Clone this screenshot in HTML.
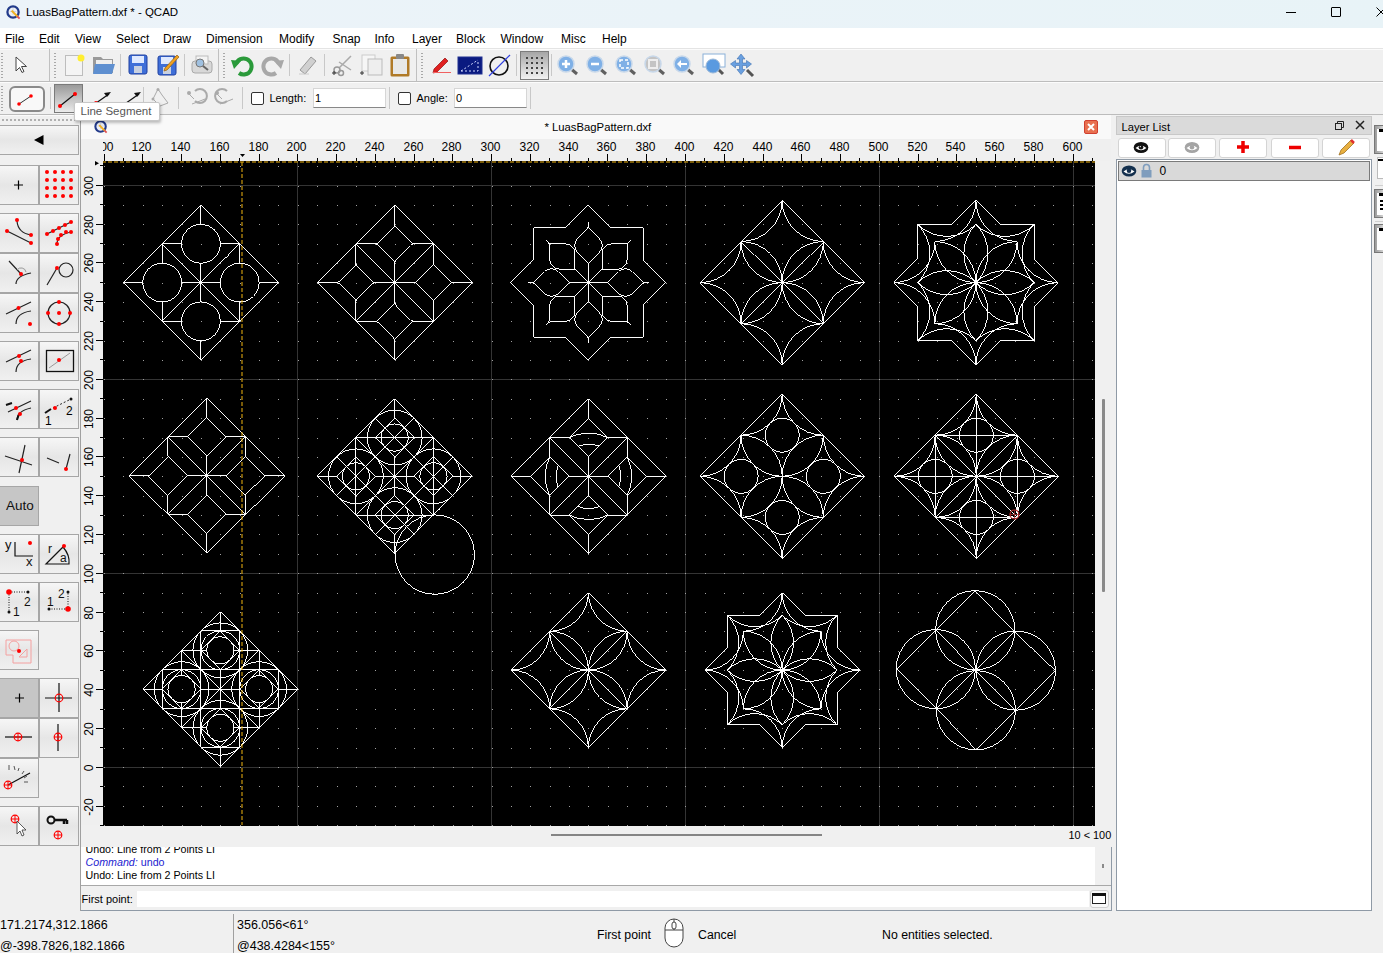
<!DOCTYPE html>
<html><head><meta charset="utf-8"><style>
html,body{margin:0;padding:0;width:1383px;height:953px;overflow:hidden;background:#f0f0f0}
body{position:relative;font-family:"Liberation Sans", sans-serif}
div,span,svg{position:absolute}
svg{overflow:visible}
.t{white-space:nowrap;line-height:1;font-family:"Liberation Sans", sans-serif}
</style></head><body>
<div style="left:0px;top:0px;width:1383px;height:28px;background:linear-gradient(90deg,#ecf3f9,#e8f3f7)"></div>
<svg style="left:6px;top:5px" width="15" height="15" viewBox="0 0 16 16"><circle cx="7.5" cy="7.5" r="6" fill="#eef0f6" stroke="#223a8a" stroke-width="2.4"/><path d="M4 7h7M7.5 3.5v7" stroke="#c0c8d8" stroke-width=".8"/><path d="M6 6l6.5 6.5" stroke="#f0b020" stroke-width="2.2"/><path d="M12 12l2.5 2.5" stroke="#e05050" stroke-width="2"/></svg>
<span class="t" style="left:26.0px;top:7.3px;font-size:11.5px;color:#000;">LuasBagPattern.dxf * - QCAD</span>
<div style="left:1286px;top:12px;width:10px;height:1px;background:#000"></div>
<div style="left:1331px;top:7px;width:10px;height:10px;border:1px solid #000;border-radius:1px;box-sizing:border-box"></div>
<svg style="left:1376px;top:7px" width="10" height="10"><path d="M0.5 0.5L9.5 9.5M9.5 0.5L0.5 9.5" stroke="#000" stroke-width="1"/></svg>
<div style="left:0px;top:28px;width:1383px;height:20px;background:#fff"></div>
<span class="t" style="left:5.0px;top:32.8px;font-size:12px;color:#000;">File</span>
<span class="t" style="left:39.0px;top:32.8px;font-size:12px;color:#000;">Edit</span>
<span class="t" style="left:75.0px;top:32.8px;font-size:12px;color:#000;">View</span>
<span class="t" style="left:116.0px;top:32.8px;font-size:12px;color:#000;">Select</span>
<span class="t" style="left:163.0px;top:32.8px;font-size:12px;color:#000;">Draw</span>
<span class="t" style="left:206.0px;top:32.8px;font-size:12px;color:#000;">Dimension</span>
<span class="t" style="left:279.0px;top:32.8px;font-size:12px;color:#000;">Modify</span>
<span class="t" style="left:332.5px;top:32.8px;font-size:12px;color:#000;">Snap</span>
<span class="t" style="left:374.5px;top:32.8px;font-size:12px;color:#000;">Info</span>
<span class="t" style="left:412.0px;top:32.8px;font-size:12px;color:#000;">Layer</span>
<span class="t" style="left:456.0px;top:32.8px;font-size:12px;color:#000;">Block</span>
<span class="t" style="left:500.5px;top:32.8px;font-size:12px;color:#000;">Window</span>
<span class="t" style="left:561.0px;top:32.8px;font-size:12px;color:#000;">Misc</span>
<span class="t" style="left:602.0px;top:32.8px;font-size:12px;color:#000;">Help</span>
<div style="left:0px;top:48px;width:1383px;height:67px;background:#f0f0f0"></div>
<div style="left:0px;top:48px;width:1383px;height:1px;background:#e4e4e4"></div>
<div style="left:0px;top:49px;width:1383px;height:1px;background:#fbfbfb"></div>
<div style="left:0px;top:81px;width:1383px;height:1px;background:#bdbdbd"></div>
<div style="left:0px;top:82px;width:1383px;height:1px;background:#fcfcfc"></div>
<div style="left:0px;top:114px;width:1383px;height:1px;background:#bcbcbc"></div>
<div style="left:1px;top:53px;width:2px;height:25px;background:repeating-linear-gradient(180deg,#a8a8a8 0 1px,transparent 1px 3px)"></div>
<div style="left:49px;top:49px;width:1px;height:32px;background:#c0c0c0"></div>
<div style="left:54px;top:53px;width:2px;height:25px;background:repeating-linear-gradient(180deg,#a8a8a8 0 1px,transparent 1px 3px)"></div>
<div style="left:120px;top:54px;width:1px;height:22px;background:#c8c8c8"></div>
<div style="left:184px;top:54px;width:1px;height:22px;background:#c8c8c8"></div>
<div style="left:218px;top:49px;width:1px;height:32px;background:#c0c0c0"></div>
<div style="left:223px;top:53px;width:2px;height:25px;background:repeating-linear-gradient(180deg,#a8a8a8 0 1px,transparent 1px 3px)"></div>
<div style="left:289px;top:54px;width:1px;height:22px;background:#c8c8c8"></div>
<div style="left:324px;top:54px;width:1px;height:22px;background:#c8c8c8"></div>
<div style="left:416px;top:49px;width:1px;height:32px;background:#c0c0c0"></div>
<div style="left:421px;top:53px;width:2px;height:25px;background:repeating-linear-gradient(180deg,#a8a8a8 0 1px,transparent 1px 3px)"></div>
<div style="left:516px;top:54px;width:1px;height:22px;background:#c8c8c8"></div>
<div style="left:551px;top:54px;width:1px;height:22px;background:#c8c8c8"></div>

<svg style="left:14px;top:56px" width="14" height="18"><path d="M2 1v14l3.5-3.5 2.5 5 2-1-2.5-5h5z" fill="#fff" stroke="#444" stroke-width="1"/></svg>
<svg style="left:64px;top:53px" width="22" height="24"><rect x="1.5" y="2.5" width="17" height="20" fill="#f4f4f4" stroke="#bdbdbd"/><circle cx="17" cy="5" r="3.5" fill="#ffee30"/></svg>
<svg style="left:92px;top:54px" width="24" height="22"><path d="M1 3h8l2 2h10v14H1z" fill="#9a9a9a"/><path d="M4 6h16v4H4z" fill="#eee"/><path d="M3 10h20l-3 10H1z" fill="#5e8fd0"/></svg>
<svg style="left:128px;top:54px" width="20" height="21"><rect x="1" y="1" width="18" height="19" rx="2" fill="#3f6fd8" stroke="#2040a0"/><rect x="4" y="2" width="12" height="7" fill="#dfe9ff"/><rect x="6" y="12" width="8" height="7" fill="#c8d0e0"/></svg>
<svg style="left:157px;top:53px" width="22" height="22"><rect x="1" y="3" width="18" height="19" rx="2" fill="#3f6fd8" stroke="#2040a0"/><rect x="4" y="4" width="12" height="7" fill="#dfe9ff"/><rect x="6" y="14" width="8" height="7" fill="#c8d0e0"/><path d="M8 15l12-13 2 2-12 13-3 1z" fill="#f0a020" stroke="#906010" stroke-width=".7"/></svg>
<svg style="left:191px;top:55px" width="22" height="20"><rect x="1" y="6" width="20" height="12" rx="3" fill="#d8d8d8" stroke="#aaa"/><rect x="5" y="1" width="12" height="8" fill="#f4f4f4" stroke="#bbb"/><circle cx="9" cy="8" r="4" fill="#9fc0e0" stroke="#777"/><path d="M12 11l5 4" stroke="#666" stroke-width="2"/></svg>
<svg style="left:231px;top:55px" width="24" height="21"><path d="M5 9a8 8 0 1 1 3 9" fill="none" stroke="#2a9a3a" stroke-width="4"/><path d="M0 5l10 1-7 8z" fill="#2a9a3a"/></svg>
<svg style="left:260px;top:55px" width="24" height="21"><path d="M19 9a8 8 0 1 0-3 9" fill="none" stroke="#a8a8a8" stroke-width="4"/><path d="M24 5l-10 1 7 8z" fill="#a8a8a8"/></svg>
<svg style="left:297px;top:55px" width="21" height="20"><path d="M3 15l11-13 5 4-11 13z" fill="#d0d0d0" stroke="#999"/><path d="M2 19h10" stroke="#ccc"/></svg>
<svg style="left:331px;top:54px" width="22" height="22"><path d="M8 14l12-12M8 8l12 8" stroke="#aaa" stroke-width="1.5"/><circle cx="6" cy="16" r="3" fill="none" stroke="#999" stroke-width="1.5"/><circle cx="10" cy="19" r="2.5" fill="none" stroke="#999" stroke-width="1.5"/><path d="M1 19h4M3 17v4" stroke="#333"/></svg>
<svg style="left:359px;top:54px" width="25" height="22"><rect x="3" y="1" width="13" height="16" fill="#f6f6f6" stroke="#ccc"/><rect x="9" y="5" width="14" height="16" fill="#eee" stroke="#bbb"/><path d="M1 19h4M3 17v4" stroke="#333"/></svg>
<svg style="left:389px;top:53px" width="22" height="24"><rect x="1.5" y="3.5" width="19" height="20" rx="1.5" fill="#b07a28"/><rect x="4" y="6" width="14" height="15" fill="#e8e8e8"/><rect x="7" y="1" width="8" height="5" rx="1" fill="#888"/></svg>
<svg style="left:432px;top:56px" width="19" height="17"><path d="M2 13L13 2l3 3L5 16l-4 1z" fill="#e02020" stroke="#901010" stroke-width=".7"/><path d="M1 16.5h18" stroke="#f06060"/></svg>
<svg style="left:458px;top:57px" width="24" height="17"><rect x="0" y="0" width="24" height="17" fill="#0a1a80" stroke="#203090"/><path d="M3 14L20 3M3 14h17V3" stroke="#d0d8ff" stroke-dasharray="2 2" fill="none"/></svg>
<svg style="left:488px;top:54px" width="23" height="23"><circle cx="11" cy="12" r="9" fill="none" stroke="#111" stroke-width="1.6"/><path d="M1 22L22 1" stroke="#3040e0" stroke-width="1.2"/></svg>
<div style="left:520px;top:51px;width:29px;height:29px;box-sizing:border-box;border:1px solid #7d7d7d;background:linear-gradient(#a6a6a6,#f2f2f2)"></div>
<svg style="left:520px;top:51px" width="29" height="29"><g fill="#444"><rect x="6" y="6" width="2" height="2"/><rect x="11" y="6" width="2" height="2"/><rect x="16" y="6" width="2" height="2"/><rect x="21" y="6" width="2" height="2"/><rect x="6" y="11" width="2" height="2"/><rect x="11" y="11" width="2" height="2"/><rect x="16" y="11" width="2" height="2"/><rect x="21" y="11" width="2" height="2"/><rect x="6" y="16" width="2" height="2"/><rect x="11" y="16" width="2" height="2"/><rect x="16" y="16" width="2" height="2"/><rect x="21" y="16" width="2" height="2"/><rect x="6" y="21" width="2" height="2"/><rect x="11" y="21" width="2" height="2"/><rect x="16" y="21" width="2" height="2"/><rect x="21" y="21" width="2" height="2"/></g></svg>

<svg style="left:557px;top:55px" width="23" height="21"><path d="M13 13l7 6" stroke="#606060" stroke-width="3"/><circle cx="9" cy="9" r="8" fill="#7fb0e6" stroke="#c8d8ea" stroke-width="1.5"/><path d="M5 9h8M9 5v8" stroke="#fff" stroke-width="2.5"/></svg>
<svg style="left:586px;top:55px" width="23" height="21"><path d="M13 13l7 6" stroke="#606060" stroke-width="3"/><circle cx="9" cy="9" r="8" fill="#7fb0e6" stroke="#c8d8ea" stroke-width="1.5"/><path d="M5 9h8" stroke="#fff" stroke-width="2.5"/></svg>
<svg style="left:615px;top:55px" width="23" height="21"><path d="M13 13l7 6" stroke="#606060" stroke-width="3"/><circle cx="9" cy="9" r="8" fill="#7fb0e6" stroke="#c8d8ea" stroke-width="1.5"/><rect x="5" y="5" width="8" height="8" fill="none" stroke="#fff" stroke-width="1.5" stroke-dasharray="3 2"/></svg>
<svg style="left:644px;top:55px" width="23" height="21"><path d="M13 13l7 6" stroke="#606060" stroke-width="3"/><circle cx="9" cy="9" r="8" fill="#c4c4c4" stroke="#c8d8ea" stroke-width="1.5"/><rect x="5" y="5" width="8" height="8" fill="none" stroke="#eee" stroke-width="2"/></svg>
<svg style="left:673px;top:55px" width="23" height="21"><path d="M13 13l7 6" stroke="#606060" stroke-width="3"/><circle cx="9" cy="9" r="8" fill="#7fb0e6" stroke="#c8d8ea" stroke-width="1.5"/><path d="M4 9l4-4v3h6v2H8v3z" fill="#fff"/></svg>
<svg style="left:702px;top:53px" width="24" height="24"><rect x="1" y="1" width="22" height="13" fill="#fff" stroke="#8ab0d8"/><path d="M15 15l6 6" stroke="#555" stroke-width="3"/><circle cx="11" cy="13" r="7" fill="#5a9ae0" stroke="#9bb8d8"/></svg>
<svg style="left:730px;top:53px" width="25" height="25"><path d="M17 17l6 6" stroke="#555" stroke-width="3"/><path d="M11 1l4 5h-2.5v4h4v-2.5l5 3.5-5 4v-2.5h-4v4h2.5l-4 5-4-5h2.5v-4h-4v2.5l-5-4 5-3.5v2.5h4v-4H7z" fill="#6aa0e0" stroke="#4070b0" stroke-width=".6"/></svg>
<div style="left:1px;top:86px;width:2px;height:25px;background:repeating-linear-gradient(180deg,#a8a8a8 0 1px,transparent 1px 3px)"></div>
<div style="left:9px;top:86px;width:36px;height:26px;box-sizing:border-box;border:2px solid #8a8a8a;border-radius:6px;background:#f8f8f8"></div>
<svg style="left:9px;top:86px" width="36" height="26"><path d="M10 18L22 10" stroke="#333"/><circle cx="10" cy="18" r="1.8" fill="#f00"/><circle cx="22" cy="10" r="1.8" fill="#f00"/></svg>
<div style="left:50px;top:87px;width:1px;height:22px;background:#c8c8c8"></div>
<div style="left:54px;top:84px;width:29px;height:29px;box-sizing:border-box;border:1px solid #7a7a7a;background:linear-gradient(#9a9a9a,#ebebeb)"></div>
<svg style="left:54px;top:84px" width="29" height="29"><path d="M6 22L21 10" stroke="#111" stroke-width="1.2"/><circle cx="6" cy="22" r="2" fill="#f00"/><circle cx="21" cy="10" r="2" fill="#f00"/></svg>
<svg style="left:85px;top:84px" width="30" height="29"><path d="M4 24L24 10" stroke="#111" stroke-width="1.2"/><path d="M26 8l-7 1 3 4z" fill="#111"/><circle cx="11" cy="19" r="2" fill="#f00"/></svg>
<svg style="left:115px;top:84px" width="30" height="29"><path d="M4 24L24 10" stroke="#111" stroke-width="1.2"/><path d="M26 8l-7 1 3 4z" fill="#111"/></svg>
<div style="left:143px;top:87px;width:1px;height:22px;background:#c8c8c8"></div>
<svg style="left:151px;top:87px" width="20" height="22"><path d="M2 12l5-10 4 6 6 8-8 3z" fill="none" stroke="#aaa" stroke-width="1"/><circle cx="7" cy="2.5" r="1.5" fill="#aaa"/><circle cx="2" cy="12" r="1.5" fill="#aaa"/></svg>
<div style="left:178px;top:87px;width:1px;height:22px;background:#c8c8c8"></div>
<svg style="left:186px;top:87px" width="21" height="22"><path d="M2 6l6 6M6 17l8-3 5-2" stroke="#aaa" fill="none"/><path d="M9 4a7 7 0 1 1 0 10" stroke="#aaa" stroke-width="2" fill="none"/><circle cx="3" cy="6" r="2" fill="#aaa"/></svg>
<svg style="left:214px;top:87px" width="22" height="22"><path d="M2 6l6 6M6 17l8-3 5-2" stroke="#aaa" fill="none"/><path d="M13 4a7 7 0 1 0 0 10" stroke="#aaa" stroke-width="2" fill="none"/><circle cx="3" cy="6" r="2" fill="#aaa"/></svg>
<div style="left:242px;top:87px;width:1px;height:22px;background:#c8c8c8"></div>
<div style="left:251px;top:92px;width:13px;height:13px;box-sizing:border-box;border:1px solid #333;border-radius:2px;background:#fff"></div>
<span class="t" style="left:269.5px;top:93.2px;font-size:11px;color:#000;">Length:</span>
<div style="left:313px;top:88px;width:73px;height:20px;box-sizing:border-box;border:1px solid #d6d6d6;border-bottom:1px solid #888;background:#fff"></div>
<span class="t" style="left:315.0px;top:93.2px;font-size:11px;color:#000;">1</span>
<div style="left:389px;top:87px;width:1px;height:22px;background:#c8c8c8"></div>
<div style="left:398px;top:92px;width:13px;height:13px;box-sizing:border-box;border:1px solid #333;border-radius:2px;background:#fff"></div>
<span class="t" style="left:416.5px;top:93.2px;font-size:11px;color:#000;">Angle:</span>
<div style="left:454px;top:88px;width:73px;height:20px;box-sizing:border-box;border:1px solid #d6d6d6;border-bottom:1px solid #888;background:#fff"></div>
<span class="t" style="left:456.0px;top:93.2px;font-size:11px;color:#000;">0</span>
<div style="left:530px;top:87px;width:1px;height:22px;background:#c8c8c8"></div>
<div style="left:0px;top:115px;width:80px;height:796px;background:#f0f0f0"></div>
<div style="left:0px;top:115px;width:80px;height:1px;background:#fafafa"></div>
<div style="left:2px;top:119px;width:74px;height:2px;background:repeating-linear-gradient(90deg,#b0b0b0 0 2px,transparent 2px 4px)"></div>
<div style="left:-1px;top:125px;width:80px;height:30px;box-sizing:border-box;border:1px solid #a6a6a6;background:linear-gradient(#f6f6f6,#e6e6e6 50%,#f0f0f0)"></div>
<svg style="left:34px;top:135px" width="10" height="10"><path d="M0 5L9.5 0v10z" fill="#000"/></svg>
<div style="left:-1px;top:165px;width:40px;height:40px;box-sizing:border-box;border:1px solid #a6a6a6;background:linear-gradient(#f6f6f6,#e6e6e6 50%,#f0f0f0)"></div>
<div style="left:39px;top:165px;width:40px;height:40px;box-sizing:border-box;border:1px solid #a6a6a6;background:linear-gradient(#f6f6f6,#e6e6e6 50%,#f0f0f0)"></div>
<div style="left:-1px;top:213px;width:40px;height:40px;box-sizing:border-box;border:1px solid #a6a6a6;background:linear-gradient(#f6f6f6,#e6e6e6 50%,#f0f0f0)"></div>
<div style="left:39px;top:213px;width:40px;height:40px;box-sizing:border-box;border:1px solid #a6a6a6;background:linear-gradient(#f6f6f6,#e6e6e6 50%,#f0f0f0)"></div>
<div style="left:-1px;top:253px;width:40px;height:40px;box-sizing:border-box;border:1px solid #a6a6a6;background:linear-gradient(#f6f6f6,#e6e6e6 50%,#f0f0f0)"></div>
<div style="left:39px;top:253px;width:40px;height:40px;box-sizing:border-box;border:1px solid #a6a6a6;background:linear-gradient(#f6f6f6,#e6e6e6 50%,#f0f0f0)"></div>
<div style="left:-1px;top:293px;width:40px;height:40px;box-sizing:border-box;border:1px solid #a6a6a6;background:linear-gradient(#f6f6f6,#e6e6e6 50%,#f0f0f0)"></div>
<div style="left:39px;top:293px;width:40px;height:40px;box-sizing:border-box;border:1px solid #a6a6a6;background:linear-gradient(#f6f6f6,#e6e6e6 50%,#f0f0f0)"></div>
<div style="left:-1px;top:341px;width:40px;height:40px;box-sizing:border-box;border:1px solid #a6a6a6;background:linear-gradient(#f6f6f6,#e6e6e6 50%,#f0f0f0)"></div>
<div style="left:39px;top:341px;width:40px;height:40px;box-sizing:border-box;border:1px solid #a6a6a6;background:linear-gradient(#f6f6f6,#e6e6e6 50%,#f0f0f0)"></div>
<div style="left:-1px;top:389px;width:40px;height:40px;box-sizing:border-box;border:1px solid #a6a6a6;background:linear-gradient(#f6f6f6,#e6e6e6 50%,#f0f0f0)"></div>
<div style="left:39px;top:389px;width:40px;height:40px;box-sizing:border-box;border:1px solid #a6a6a6;background:linear-gradient(#f6f6f6,#e6e6e6 50%,#f0f0f0)"></div>
<div style="left:-1px;top:437px;width:40px;height:40px;box-sizing:border-box;border:1px solid #a6a6a6;background:linear-gradient(#f6f6f6,#e6e6e6 50%,#f0f0f0)"></div>
<div style="left:39px;top:437px;width:40px;height:40px;box-sizing:border-box;border:1px solid #a6a6a6;background:linear-gradient(#f6f6f6,#e6e6e6 50%,#f0f0f0)"></div>
<div style="left:-1px;top:486px;width:40px;height:40px;box-sizing:border-box;border:1px solid #a6a6a6;background:linear-gradient(#c6c6c6,#c6c6c6)"></div>
<div style="left:-1px;top:534px;width:40px;height:40px;box-sizing:border-box;border:1px solid #a6a6a6;background:linear-gradient(#f6f6f6,#e6e6e6 50%,#f0f0f0)"></div>
<div style="left:39px;top:534px;width:40px;height:40px;box-sizing:border-box;border:1px solid #a6a6a6;background:linear-gradient(#f6f6f6,#e6e6e6 50%,#f0f0f0)"></div>
<div style="left:-1px;top:582px;width:40px;height:40px;box-sizing:border-box;border:1px solid #a6a6a6;background:linear-gradient(#f6f6f6,#e6e6e6 50%,#f0f0f0)"></div>
<div style="left:39px;top:582px;width:40px;height:40px;box-sizing:border-box;border:1px solid #a6a6a6;background:linear-gradient(#f6f6f6,#e6e6e6 50%,#f0f0f0)"></div>
<div style="left:-1px;top:630px;width:40px;height:40px;box-sizing:border-box;border:1px solid #a6a6a6;background:linear-gradient(#f6f6f6,#e6e6e6 50%,#f0f0f0)"></div>
<div style="left:-1px;top:678px;width:40px;height:40px;box-sizing:border-box;border:1px solid #a6a6a6;background:linear-gradient(#c6c6c6,#c6c6c6)"></div>
<div style="left:39px;top:678px;width:40px;height:40px;box-sizing:border-box;border:1px solid #a6a6a6;background:linear-gradient(#f6f6f6,#e6e6e6 50%,#f0f0f0)"></div>
<div style="left:-1px;top:718px;width:40px;height:40px;box-sizing:border-box;border:1px solid #a6a6a6;background:linear-gradient(#f6f6f6,#e6e6e6 50%,#f0f0f0)"></div>
<div style="left:39px;top:718px;width:40px;height:40px;box-sizing:border-box;border:1px solid #a6a6a6;background:linear-gradient(#f6f6f6,#e6e6e6 50%,#f0f0f0)"></div>
<div style="left:-1px;top:758px;width:40px;height:40px;box-sizing:border-box;border:1px solid #a6a6a6;background:linear-gradient(#f6f6f6,#e6e6e6 50%,#f0f0f0)"></div>
<div style="left:-1px;top:806px;width:40px;height:40px;box-sizing:border-box;border:1px solid #a6a6a6;background:linear-gradient(#f6f6f6,#e6e6e6 50%,#f0f0f0)"></div>
<div style="left:39px;top:806px;width:40px;height:40px;box-sizing:border-box;border:1px solid #a6a6a6;background:linear-gradient(#f6f6f6,#e6e6e6 50%,#f0f0f0)"></div>

<svg style="left:0px;top:165px" width="80" height="40"><path d="M14 20h9M18.5 15.5v9" stroke="#000" stroke-width="1.2"/>
<g fill="#f00"><circle cx="47" cy="7" r="2"/><circle cx="55" cy="7" r="2"/><circle cx="63" cy="7" r="2"/><circle cx="71" cy="7" r="2"/><circle cx="47" cy="15" r="2"/><circle cx="55" cy="15" r="2"/><circle cx="63" cy="15" r="2"/><circle cx="71" cy="15" r="2"/><circle cx="47" cy="23" r="2"/><circle cx="55" cy="23" r="2"/><circle cx="63" cy="23" r="2"/><circle cx="71" cy="23" r="2"/><circle cx="47" cy="31" r="2"/><circle cx="55" cy="31" r="2"/><circle cx="63" cy="31" r="2"/><circle cx="71" cy="31" r="2"/></g></svg>
<svg style="left:0px;top:213px" width="80" height="40"><path d="M7 18l24 12M17 8q1 12 14 14" stroke="#222" stroke-width="1.2" fill="none"/><g fill="#f00"><circle cx="7" cy="18" r="2"/><circle cx="31" cy="30" r="2"/><circle cx="17" cy="7" r="2"/><circle cx="31" cy="22" r="2"/></g>
<path d="M47 21l24-12M57 31q0-9 14-12" stroke="#222" stroke-width="1.2" fill="none"/><g fill="#f00"><circle cx="47" cy="21" r="2"/><circle cx="53" cy="18" r="2"/><circle cx="59" cy="15" r="2"/><circle cx="65" cy="12" r="2"/><circle cx="71" cy="9" r="2"/><circle cx="57" cy="31" r="2"/><circle cx="58" cy="26" r="2"/><circle cx="61" cy="22" r="2"/><circle cx="66" cy="19" r="2"/><circle cx="71" cy="19" r="2"/></g></svg>
<svg style="left:0px;top:253px" width="80" height="40"><path d="M9 8l12 13M16 31q0-8 15-11" stroke="#222" stroke-width="1.2" fill="none"/><path d="M17 17a5 5 0 0 1 9 2" stroke="#999" fill="none"/><circle cx="21" cy="21" r="2" fill="#f00"/>
<circle cx="66" cy="17" r="7" fill="none" stroke="#222" stroke-width="1.2"/><path d="M47 32l10-17" stroke="#222" stroke-width="1.2"/><circle cx="57" cy="15" r="2" fill="#f00"/></svg>
<svg style="left:0px;top:293px" width="80" height="40"><path d="M6 21l25-12M16 31q0-11 15-13" stroke="#222" stroke-width="1.2" fill="none"/><circle cx="18.5" cy="15" r="2" fill="#f00"/><circle cx="30" cy="31" r="2" fill="#f00"/>
<circle cx="59" cy="20" r="11" fill="none" stroke="#222" stroke-width="1.2"/><g fill="#f00"><circle cx="59" cy="20" r="2"/><circle cx="59" cy="9" r="2"/><circle cx="59" cy="31" r="2"/><circle cx="48" cy="20" r="2"/><circle cx="70" cy="20" r="2"/></g></svg>
<svg style="left:0px;top:341px" width="80" height="40"><path d="M6 21l25-12M16 31q0-11 15-13" stroke="#222" stroke-width="1.2" fill="none"/><circle cx="19" cy="15" r="2" fill="#f00"/><circle cx="21" cy="20" r="2" fill="#f00"/>
<rect x="46.5" y="9.5" width="27" height="21" fill="none" stroke="#111" stroke-width="1.3"/><path d="M49 27l21-15" stroke="#999"/><circle cx="59" cy="19" r="2" fill="#f00"/></svg>
<svg style="left:0px;top:389px" width="80" height="40"><path d="M8 23l23-11M17 31q0-9 14-12" stroke="#222" stroke-width="1.2" fill="none"/><path d="M6 16l6-2M17 31l2-6" stroke="#111" stroke-width="2"/><circle cx="16" cy="19" r="2" fill="#f00"/><circle cx="20" cy="25" r="2" fill="#f00"/>
<path d="M53 19l18-9" stroke="#222" stroke-dasharray="2 2"/><circle cx="71" cy="10" r="1.5" fill="#111"/><path d="M45 24l6-4" stroke="#111" stroke-width="2"/><circle cx="55" cy="19" r="2" fill="#f00"/><text x="66" y="26" font-size="12" font-family="Liberation Sans">2</text><text x="45" y="36" font-size="12" font-family="Liberation Sans">1</text></svg>
<svg style="left:0px;top:437px" width="80" height="40"><path d="M5 19l27 9M19 36l6-28" stroke="#222" stroke-width="1.2"/><circle cx="22" cy="23" r="2" fill="#f00"/>
<path d="M47 21l12 5M66 32l4-15" stroke="#222" stroke-width="1.2"/><circle cx="66" cy="32" r="2" fill="#f00"/></svg>

<span class="t" style="left:6.0px;top:499.1px;font-size:13.5px;color:#111;">Auto</span>

<svg style="left:0px;top:534px" width="80" height="40"><text x="5" y="15" font-size="13" font-family="Liberation Sans" fill="#111">y</text><text x="26" y="32" font-size="13" font-family="Liberation Sans" fill="#111">x</text><path d="M15 8v14h18" stroke="#111" fill="none" stroke-width="1.2"/><circle cx="30" cy="9" r="2" fill="#f00"/>
<path d="M46 30l17-17q7 8 6 17z" stroke="#111" fill="none" stroke-width="1.2"/><text x="48" y="19" font-size="12" font-family="Liberation Sans" fill="#111">r</text><text x="60" y="28" font-size="12" font-family="Liberation Sans" fill="#111">a</text><circle cx="64" cy="12" r="2" fill="#f00"/></svg>
<svg style="left:0px;top:582px" width="80" height="40"><path d="M9 10h19M9 10v20" stroke="#111" stroke-dasharray="1 1.5"/><circle cx="9" cy="10" r="2.8" fill="#f00"/><circle cx="28" cy="10" r="1.5" fill="#111"/><circle cx="9" cy="30" r="1.5" fill="#111"/><text x="24" y="24" font-size="12" font-family="Liberation Sans" fill="#111">2</text><text x="13" y="34" font-size="12" font-family="Liberation Sans" fill="#111">1</text>
<path d="M49 27h19M68 9v18" stroke="#111" stroke-dasharray="1 1.5"/><circle cx="68" cy="27" r="2.8" fill="#f00"/><circle cx="49" cy="27" r="1.5" fill="#111"/><circle cx="68" cy="10" r="1.5" fill="#111"/><text x="58" y="16" font-size="12" font-family="Liberation Sans" fill="#111">2</text><text x="47" y="24" font-size="12" font-family="Liberation Sans" fill="#111">1</text></svg>
<svg style="left:0px;top:630px" width="40" height="40"><path d="M6 10h25v23H13v-8H6z" fill="none" stroke="#f4a0a0"/><circle cx="14" cy="16" r="5" fill="none" stroke="#f4a0a0"/><path d="M19 27l8-8v8z" fill="none" stroke="#f4a0a0"/><circle cx="19" cy="21" r="2" fill="#f00"/></svg>
<svg style="left:0px;top:678px" width="80" height="40"><path d="M15 20h9M19.5 15.5v9" stroke="#000" stroke-width="1.2"/>
<path d="M45 20h27M59 5v29" stroke="#111" stroke-width="1.2"/><circle cx="59" cy="20" r="3.8" fill="none" stroke="#f00" stroke-width="1.2"/></svg>
<svg style="left:0px;top:718px" width="80" height="40"><path d="M5 19h27" stroke="#111" stroke-width="1.2"/><circle cx="18" cy="19" r="3.8" fill="none" stroke="#f00" stroke-width="1.2"/><path d="M14 19h8M18 15v8" stroke="#f00"/>
<path d="M58 6v27" stroke="#111" stroke-width="1.2"/><circle cx="58" cy="19" r="3.8" fill="none" stroke="#f00" stroke-width="1.2"/><path d="M54 19h8M58 15v8" stroke="#f00"/></svg>
<svg style="left:0px;top:758px" width="40" height="40"><path d="M8 27l22-12" stroke="#111" stroke-width="1.2"/><path d="M9 7v5M14 8l1 4M19 10l-1 3M24 13l-2 3M27 18l-3 2M28 24h-4" stroke="#555"/><circle cx="8" cy="27" r="3.8" fill="none" stroke="#f00" stroke-width="1.2"/><path d="M4 27h8M8 23v8" stroke="#f00"/></svg>
<svg style="left:0px;top:806px" width="80" height="40"><circle cx="15" cy="13" r="3.8" fill="none" stroke="#f00" stroke-width="1.2"/><path d="M11 13h8M15 9v8" stroke="#f00"/><path d="M17 15v13l3-3 2 5 2-1-2-5h4z" fill="#fff" stroke="#333" stroke-width=".8"/>
<circle cx="51" cy="14" r="3.5" fill="none" stroke="#111" stroke-width="2"/><path d="M54 14h13M64 14v4M67 14v4" stroke="#111" stroke-width="2.5"/><circle cx="58" cy="29" r="3.8" fill="none" stroke="#f00" stroke-width="1.2"/><path d="M54 29h8M58 25v8" stroke="#f00"/></svg>

<div style="left:80px;top:115px;width:1031px;height:796px;background:#f0f0f0"></div>
<div style="left:80px;top:115px;width:1px;height:796px;background:#a0a0a0"></div>
<div style="left:81px;top:115px;width:1030px;height:24px;background:#f9f9f9"></div>
<svg style="left:94px;top:120px" width="14" height="13" viewBox="0 0 16 15"><circle cx="7.5" cy="7.5" r="6" fill="#eef0f6" stroke="#223a8a" stroke-width="2.4"/><path d="M4 7h7M7.5 3.5v7" stroke="#c0c8d8" stroke-width=".8"/><path d="M6 6l6.5 6.5" stroke="#f0b020" stroke-width="2.2"/><path d="M12 12l2.5 2.5" stroke="#e05050" stroke-width="2"/></svg>
<span class="t" style="left:544.5px;top:121.8px;font-size:11.5px;color:#000;">*</span>
<span class="t" style="left:552.0px;top:121.9px;font-size:11.3px;color:#000;">LuasBagPattern.dxf</span>
<div style="left:1084px;top:120px;width:14px;height:14px;box-sizing:border-box;border:1px solid #d04030;border-radius:2px;background:#e87050"></div>
<svg style="left:1084px;top:120px" width="14" height="14"><path d="M4 4l6 6M10 4l-6 6" stroke="#fff" stroke-width="2"/></svg>
<div style="left:81px;top:139px;width:1030px;height:22px;background:#efefef"></div>
<div style="left:81px;top:139px;width:22px;height:686px;background:#efefef"></div>
<svg style="left:0;top:0" width="1383" height="953"><g fill="#000"><rect x="104" y="154" width="1" height="7"/><rect x="123" y="158" width="1" height="3"/><rect x="142" y="154" width="1" height="7"/><rect x="162" y="158" width="1" height="3"/><rect x="181" y="154" width="1" height="7"/><rect x="201" y="158" width="1" height="3"/><rect x="220" y="154" width="1" height="7"/><rect x="239" y="158" width="1" height="3"/><rect x="259" y="154" width="1" height="7"/><rect x="278" y="158" width="1" height="3"/><rect x="297" y="154" width="1" height="7"/><rect x="317" y="158" width="1" height="3"/><rect x="336" y="154" width="1" height="7"/><rect x="356" y="158" width="1" height="3"/><rect x="375" y="154" width="1" height="7"/><rect x="394" y="158" width="1" height="3"/><rect x="414" y="154" width="1" height="7"/><rect x="433" y="158" width="1" height="3"/><rect x="452" y="154" width="1" height="7"/><rect x="472" y="158" width="1" height="3"/><rect x="491" y="154" width="1" height="7"/><rect x="511" y="158" width="1" height="3"/><rect x="530" y="154" width="1" height="7"/><rect x="549" y="158" width="1" height="3"/><rect x="569" y="154" width="1" height="7"/><rect x="588" y="158" width="1" height="3"/><rect x="607" y="154" width="1" height="7"/><rect x="627" y="158" width="1" height="3"/><rect x="646" y="154" width="1" height="7"/><rect x="666" y="158" width="1" height="3"/><rect x="685" y="154" width="1" height="7"/><rect x="704" y="158" width="1" height="3"/><rect x="724" y="154" width="1" height="7"/><rect x="743" y="158" width="1" height="3"/><rect x="763" y="154" width="1" height="7"/><rect x="782" y="158" width="1" height="3"/><rect x="801" y="154" width="1" height="7"/><rect x="821" y="158" width="1" height="3"/><rect x="840" y="154" width="1" height="7"/><rect x="859" y="158" width="1" height="3"/><rect x="879" y="154" width="1" height="7"/><rect x="898" y="158" width="1" height="3"/><rect x="918" y="154" width="1" height="7"/><rect x="937" y="158" width="1" height="3"/><rect x="956" y="154" width="1" height="7"/><rect x="976" y="158" width="1" height="3"/><rect x="995" y="154" width="1" height="7"/><rect x="1014" y="158" width="1" height="3"/><rect x="1034" y="154" width="1" height="7"/><rect x="1053" y="158" width="1" height="3"/><rect x="1073" y="154" width="1" height="7"/><rect x="1092" y="158" width="1" height="3"/><rect x="100" y="825" width="3" height="1"/><rect x="96" y="806" width="7" height="1"/><rect x="100" y="786" width="3" height="1"/><rect x="96" y="767" width="7" height="1"/><rect x="100" y="747" width="3" height="1"/><rect x="96" y="728" width="7" height="1"/><rect x="100" y="709" width="3" height="1"/><rect x="96" y="689" width="7" height="1"/><rect x="100" y="670" width="3" height="1"/><rect x="96" y="650" width="7" height="1"/><rect x="100" y="631" width="3" height="1"/><rect x="96" y="612" width="7" height="1"/><rect x="100" y="592" width="3" height="1"/><rect x="96" y="573" width="7" height="1"/><rect x="100" y="553" width="3" height="1"/><rect x="96" y="534" width="7" height="1"/><rect x="100" y="515" width="3" height="1"/><rect x="96" y="495" width="7" height="1"/><rect x="100" y="476" width="3" height="1"/><rect x="96" y="456" width="7" height="1"/><rect x="100" y="437" width="3" height="1"/><rect x="96" y="418" width="7" height="1"/><rect x="100" y="398" width="3" height="1"/><rect x="96" y="379" width="7" height="1"/><rect x="100" y="359" width="3" height="1"/><rect x="96" y="340" width="7" height="1"/><rect x="100" y="321" width="3" height="1"/><rect x="96" y="301" width="7" height="1"/><rect x="100" y="282" width="3" height="1"/><rect x="96" y="262" width="7" height="1"/><rect x="100" y="243" width="3" height="1"/><rect x="96" y="224" width="7" height="1"/><rect x="100" y="204" width="3" height="1"/><rect x="96" y="185" width="7" height="1"/><rect x="100" y="165" width="3" height="1"/></g></svg>
<div style="left:103px;top:139px;width:992px;height:16px;overflow:hidden"><span class="t" style="left:-19.5px;top:1.8px;font-size:12px;width:40px;text-align:center">100</span><span class="t" style="left:18.5px;top:1.8px;font-size:12px;width:40px;text-align:center">120</span><span class="t" style="left:57.5px;top:1.8px;font-size:12px;width:40px;text-align:center">140</span><span class="t" style="left:96.5px;top:1.8px;font-size:12px;width:40px;text-align:center">160</span><span class="t" style="left:135.5px;top:1.8px;font-size:12px;width:40px;text-align:center">180</span><span class="t" style="left:173.5px;top:1.8px;font-size:12px;width:40px;text-align:center">200</span><span class="t" style="left:212.5px;top:1.8px;font-size:12px;width:40px;text-align:center">220</span><span class="t" style="left:251.5px;top:1.8px;font-size:12px;width:40px;text-align:center">240</span><span class="t" style="left:290.5px;top:1.8px;font-size:12px;width:40px;text-align:center">260</span><span class="t" style="left:328.5px;top:1.8px;font-size:12px;width:40px;text-align:center">280</span><span class="t" style="left:367.5px;top:1.8px;font-size:12px;width:40px;text-align:center">300</span><span class="t" style="left:406.5px;top:1.8px;font-size:12px;width:40px;text-align:center">320</span><span class="t" style="left:445.5px;top:1.8px;font-size:12px;width:40px;text-align:center">340</span><span class="t" style="left:483.5px;top:1.8px;font-size:12px;width:40px;text-align:center">360</span><span class="t" style="left:522.5px;top:1.8px;font-size:12px;width:40px;text-align:center">380</span><span class="t" style="left:561.5px;top:1.8px;font-size:12px;width:40px;text-align:center">400</span><span class="t" style="left:600.5px;top:1.8px;font-size:12px;width:40px;text-align:center">420</span><span class="t" style="left:639.5px;top:1.8px;font-size:12px;width:40px;text-align:center">440</span><span class="t" style="left:677.5px;top:1.8px;font-size:12px;width:40px;text-align:center">460</span><span class="t" style="left:716.5px;top:1.8px;font-size:12px;width:40px;text-align:center">480</span><span class="t" style="left:755.5px;top:1.8px;font-size:12px;width:40px;text-align:center">500</span><span class="t" style="left:794.5px;top:1.8px;font-size:12px;width:40px;text-align:center">520</span><span class="t" style="left:832.5px;top:1.8px;font-size:12px;width:40px;text-align:center">540</span><span class="t" style="left:871.5px;top:1.8px;font-size:12px;width:40px;text-align:center">560</span><span class="t" style="left:910.5px;top:1.8px;font-size:12px;width:40px;text-align:center">580</span><span class="t" style="left:949.5px;top:1.8px;font-size:12px;width:40px;text-align:center">600</span></div>
<div style="left:81px;top:160px;width:15px;height:665px;overflow:hidden"><span class="t" style="left:-12.5px;top:639.8px;font-size:12px;width:40px;height:14px;text-align:center;line-height:14px;transform:rotate(-90deg)">-20</span><span class="t" style="left:-12.5px;top:600.8px;font-size:12px;width:40px;height:14px;text-align:center;line-height:14px;transform:rotate(-90deg)">0</span><span class="t" style="left:-12.5px;top:561.8px;font-size:12px;width:40px;height:14px;text-align:center;line-height:14px;transform:rotate(-90deg)">20</span><span class="t" style="left:-12.5px;top:522.8px;font-size:12px;width:40px;height:14px;text-align:center;line-height:14px;transform:rotate(-90deg)">40</span><span class="t" style="left:-12.5px;top:483.8px;font-size:12px;width:40px;height:14px;text-align:center;line-height:14px;transform:rotate(-90deg)">60</span><span class="t" style="left:-12.5px;top:445.8px;font-size:12px;width:40px;height:14px;text-align:center;line-height:14px;transform:rotate(-90deg)">80</span><span class="t" style="left:-12.5px;top:406.8px;font-size:12px;width:40px;height:14px;text-align:center;line-height:14px;transform:rotate(-90deg)">100</span><span class="t" style="left:-12.5px;top:367.8px;font-size:12px;width:40px;height:14px;text-align:center;line-height:14px;transform:rotate(-90deg)">120</span><span class="t" style="left:-12.5px;top:328.8px;font-size:12px;width:40px;height:14px;text-align:center;line-height:14px;transform:rotate(-90deg)">140</span><span class="t" style="left:-12.5px;top:289.8px;font-size:12px;width:40px;height:14px;text-align:center;line-height:14px;transform:rotate(-90deg)">160</span><span class="t" style="left:-12.5px;top:251.8px;font-size:12px;width:40px;height:14px;text-align:center;line-height:14px;transform:rotate(-90deg)">180</span><span class="t" style="left:-12.5px;top:212.8px;font-size:12px;width:40px;height:14px;text-align:center;line-height:14px;transform:rotate(-90deg)">200</span><span class="t" style="left:-12.5px;top:173.8px;font-size:12px;width:40px;height:14px;text-align:center;line-height:14px;transform:rotate(-90deg)">220</span><span class="t" style="left:-12.5px;top:134.8px;font-size:12px;width:40px;height:14px;text-align:center;line-height:14px;transform:rotate(-90deg)">240</span><span class="t" style="left:-12.5px;top:95.8px;font-size:12px;width:40px;height:14px;text-align:center;line-height:14px;transform:rotate(-90deg)">260</span><span class="t" style="left:-12.5px;top:57.8px;font-size:12px;width:40px;height:14px;text-align:center;line-height:14px;transform:rotate(-90deg)">280</span><span class="t" style="left:-12.5px;top:18.8px;font-size:12px;width:40px;height:14px;text-align:center;line-height:14px;transform:rotate(-90deg)">300</span></div>
<svg style="left:240px;top:154px" width="6" height="4"><path d="M0 0h5l-2.5 3z" fill="#000"/></svg>
<svg style="left:95px;top:161px" width="5" height="5"><path d="M0 0v4.5l4-2.2z" fill="#000"/></svg>
<div style="left:103px;top:161px;width:992px;height:665px;background:#000;overflow:hidden"><svg style="left:0;top:0" width="992" height="665"><g transform="translate(-103,-161)"><g fill="#343434"><rect x="297" y="160" width="1" height="666"/><rect x="491" y="160" width="1" height="666"/><rect x="685" y="160" width="1" height="666"/><rect x="879" y="160" width="1" height="666"/><rect x="1073" y="160" width="1" height="666"/><rect x="103" y="185" width="992" height="1"/><rect x="103" y="379" width="992" height="1"/><rect x="103" y="573" width="992" height="1"/><rect x="103" y="767" width="992" height="1"/></g><path fill="#a0a0a0" d="M104 825h1v1h-1zM104 806h1v1h-1zM104 786h1v1h-1zM104 767h1v1h-1zM104 748h1v1h-1zM104 728h1v1h-1zM104 709h1v1h-1zM104 689h1v1h-1zM104 670h1v1h-1zM104 651h1v1h-1zM104 631h1v1h-1zM104 612h1v1h-1zM104 593h1v1h-1zM104 573h1v1h-1zM104 554h1v1h-1zM104 534h1v1h-1zM104 515h1v1h-1zM104 496h1v1h-1zM104 476h1v1h-1zM104 457h1v1h-1zM104 438h1v1h-1zM104 418h1v1h-1zM104 399h1v1h-1zM104 379h1v1h-1zM104 360h1v1h-1zM104 341h1v1h-1zM104 321h1v1h-1zM104 302h1v1h-1zM104 283h1v1h-1zM104 263h1v1h-1zM104 244h1v1h-1zM104 224h1v1h-1zM104 205h1v1h-1zM104 186h1v1h-1zM104 166h1v1h-1zM123 825h1v1h-1zM123 806h1v1h-1zM123 786h1v1h-1zM123 767h1v1h-1zM123 748h1v1h-1zM123 728h1v1h-1zM123 709h1v1h-1zM123 689h1v1h-1zM123 670h1v1h-1zM123 651h1v1h-1zM123 631h1v1h-1zM123 612h1v1h-1zM123 593h1v1h-1zM123 573h1v1h-1zM123 554h1v1h-1zM123 534h1v1h-1zM123 515h1v1h-1zM123 496h1v1h-1zM123 476h1v1h-1zM123 457h1v1h-1zM123 438h1v1h-1zM123 418h1v1h-1zM123 399h1v1h-1zM123 379h1v1h-1zM123 360h1v1h-1zM123 341h1v1h-1zM123 321h1v1h-1zM123 302h1v1h-1zM123 283h1v1h-1zM123 263h1v1h-1zM123 244h1v1h-1zM123 224h1v1h-1zM123 205h1v1h-1zM123 186h1v1h-1zM123 166h1v1h-1zM143 825h1v1h-1zM143 806h1v1h-1zM143 786h1v1h-1zM143 767h1v1h-1zM143 748h1v1h-1zM143 728h1v1h-1zM143 709h1v1h-1zM143 689h1v1h-1zM143 670h1v1h-1zM143 651h1v1h-1zM143 631h1v1h-1zM143 612h1v1h-1zM143 593h1v1h-1zM143 573h1v1h-1zM143 554h1v1h-1zM143 534h1v1h-1zM143 515h1v1h-1zM143 496h1v1h-1zM143 476h1v1h-1zM143 457h1v1h-1zM143 438h1v1h-1zM143 418h1v1h-1zM143 399h1v1h-1zM143 379h1v1h-1zM143 360h1v1h-1zM143 341h1v1h-1zM143 321h1v1h-1zM143 302h1v1h-1zM143 283h1v1h-1zM143 263h1v1h-1zM143 244h1v1h-1zM143 224h1v1h-1zM143 205h1v1h-1zM143 186h1v1h-1zM143 166h1v1h-1zM162 825h1v1h-1zM162 806h1v1h-1zM162 786h1v1h-1zM162 767h1v1h-1zM162 748h1v1h-1zM162 728h1v1h-1zM162 709h1v1h-1zM162 689h1v1h-1zM162 670h1v1h-1zM162 651h1v1h-1zM162 631h1v1h-1zM162 612h1v1h-1zM162 593h1v1h-1zM162 573h1v1h-1zM162 554h1v1h-1zM162 534h1v1h-1zM162 515h1v1h-1zM162 496h1v1h-1zM162 476h1v1h-1zM162 457h1v1h-1zM162 438h1v1h-1zM162 418h1v1h-1zM162 399h1v1h-1zM162 379h1v1h-1zM162 360h1v1h-1zM162 341h1v1h-1zM162 321h1v1h-1zM162 302h1v1h-1zM162 283h1v1h-1zM162 263h1v1h-1zM162 244h1v1h-1zM162 224h1v1h-1zM162 205h1v1h-1zM162 186h1v1h-1zM162 166h1v1h-1zM182 825h1v1h-1zM182 806h1v1h-1zM182 786h1v1h-1zM182 767h1v1h-1zM182 748h1v1h-1zM182 728h1v1h-1zM182 709h1v1h-1zM182 689h1v1h-1zM182 670h1v1h-1zM182 651h1v1h-1zM182 631h1v1h-1zM182 612h1v1h-1zM182 593h1v1h-1zM182 573h1v1h-1zM182 554h1v1h-1zM182 534h1v1h-1zM182 515h1v1h-1zM182 496h1v1h-1zM182 476h1v1h-1zM182 457h1v1h-1zM182 438h1v1h-1zM182 418h1v1h-1zM182 399h1v1h-1zM182 379h1v1h-1zM182 360h1v1h-1zM182 341h1v1h-1zM182 321h1v1h-1zM182 302h1v1h-1zM182 283h1v1h-1zM182 263h1v1h-1zM182 244h1v1h-1zM182 224h1v1h-1zM182 205h1v1h-1zM182 186h1v1h-1zM182 166h1v1h-1zM201 825h1v1h-1zM201 806h1v1h-1zM201 786h1v1h-1zM201 767h1v1h-1zM201 748h1v1h-1zM201 728h1v1h-1zM201 709h1v1h-1zM201 689h1v1h-1zM201 670h1v1h-1zM201 651h1v1h-1zM201 631h1v1h-1zM201 612h1v1h-1zM201 593h1v1h-1zM201 573h1v1h-1zM201 554h1v1h-1zM201 534h1v1h-1zM201 515h1v1h-1zM201 496h1v1h-1zM201 476h1v1h-1zM201 457h1v1h-1zM201 438h1v1h-1zM201 418h1v1h-1zM201 399h1v1h-1zM201 379h1v1h-1zM201 360h1v1h-1zM201 341h1v1h-1zM201 321h1v1h-1zM201 302h1v1h-1zM201 283h1v1h-1zM201 263h1v1h-1zM201 244h1v1h-1zM201 224h1v1h-1zM201 205h1v1h-1zM201 186h1v1h-1zM201 166h1v1h-1zM220 825h1v1h-1zM220 806h1v1h-1zM220 786h1v1h-1zM220 767h1v1h-1zM220 748h1v1h-1zM220 728h1v1h-1zM220 709h1v1h-1zM220 689h1v1h-1zM220 670h1v1h-1zM220 651h1v1h-1zM220 631h1v1h-1zM220 612h1v1h-1zM220 593h1v1h-1zM220 573h1v1h-1zM220 554h1v1h-1zM220 534h1v1h-1zM220 515h1v1h-1zM220 496h1v1h-1zM220 476h1v1h-1zM220 457h1v1h-1zM220 438h1v1h-1zM220 418h1v1h-1zM220 399h1v1h-1zM220 379h1v1h-1zM220 360h1v1h-1zM220 341h1v1h-1zM220 321h1v1h-1zM220 302h1v1h-1zM220 283h1v1h-1zM220 263h1v1h-1zM220 244h1v1h-1zM220 224h1v1h-1zM220 205h1v1h-1zM220 186h1v1h-1zM220 166h1v1h-1zM240 825h1v1h-1zM240 806h1v1h-1zM240 786h1v1h-1zM240 767h1v1h-1zM240 748h1v1h-1zM240 728h1v1h-1zM240 709h1v1h-1zM240 689h1v1h-1zM240 670h1v1h-1zM240 651h1v1h-1zM240 631h1v1h-1zM240 612h1v1h-1zM240 593h1v1h-1zM240 573h1v1h-1zM240 554h1v1h-1zM240 534h1v1h-1zM240 515h1v1h-1zM240 496h1v1h-1zM240 476h1v1h-1zM240 457h1v1h-1zM240 438h1v1h-1zM240 418h1v1h-1zM240 399h1v1h-1zM240 379h1v1h-1zM240 360h1v1h-1zM240 341h1v1h-1zM240 321h1v1h-1zM240 302h1v1h-1zM240 283h1v1h-1zM240 263h1v1h-1zM240 244h1v1h-1zM240 224h1v1h-1zM240 205h1v1h-1zM240 186h1v1h-1zM240 166h1v1h-1zM259 825h1v1h-1zM259 806h1v1h-1zM259 786h1v1h-1zM259 767h1v1h-1zM259 748h1v1h-1zM259 728h1v1h-1zM259 709h1v1h-1zM259 689h1v1h-1zM259 670h1v1h-1zM259 651h1v1h-1zM259 631h1v1h-1zM259 612h1v1h-1zM259 593h1v1h-1zM259 573h1v1h-1zM259 554h1v1h-1zM259 534h1v1h-1zM259 515h1v1h-1zM259 496h1v1h-1zM259 476h1v1h-1zM259 457h1v1h-1zM259 438h1v1h-1zM259 418h1v1h-1zM259 399h1v1h-1zM259 379h1v1h-1zM259 360h1v1h-1zM259 341h1v1h-1zM259 321h1v1h-1zM259 302h1v1h-1zM259 283h1v1h-1zM259 263h1v1h-1zM259 244h1v1h-1zM259 224h1v1h-1zM259 205h1v1h-1zM259 186h1v1h-1zM259 166h1v1h-1zM278 825h1v1h-1zM278 806h1v1h-1zM278 786h1v1h-1zM278 767h1v1h-1zM278 748h1v1h-1zM278 728h1v1h-1zM278 709h1v1h-1zM278 689h1v1h-1zM278 670h1v1h-1zM278 651h1v1h-1zM278 631h1v1h-1zM278 612h1v1h-1zM278 593h1v1h-1zM278 573h1v1h-1zM278 554h1v1h-1zM278 534h1v1h-1zM278 515h1v1h-1zM278 496h1v1h-1zM278 476h1v1h-1zM278 457h1v1h-1zM278 438h1v1h-1zM278 418h1v1h-1zM278 399h1v1h-1zM278 379h1v1h-1zM278 360h1v1h-1zM278 341h1v1h-1zM278 321h1v1h-1zM278 302h1v1h-1zM278 283h1v1h-1zM278 263h1v1h-1zM278 244h1v1h-1zM278 224h1v1h-1zM278 205h1v1h-1zM278 186h1v1h-1zM278 166h1v1h-1zM298 825h1v1h-1zM298 806h1v1h-1zM298 786h1v1h-1zM298 767h1v1h-1zM298 748h1v1h-1zM298 728h1v1h-1zM298 709h1v1h-1zM298 689h1v1h-1zM298 670h1v1h-1zM298 651h1v1h-1zM298 631h1v1h-1zM298 612h1v1h-1zM298 593h1v1h-1zM298 573h1v1h-1zM298 554h1v1h-1zM298 534h1v1h-1zM298 515h1v1h-1zM298 496h1v1h-1zM298 476h1v1h-1zM298 457h1v1h-1zM298 438h1v1h-1zM298 418h1v1h-1zM298 399h1v1h-1zM298 379h1v1h-1zM298 360h1v1h-1zM298 341h1v1h-1zM298 321h1v1h-1zM298 302h1v1h-1zM298 283h1v1h-1zM298 263h1v1h-1zM298 244h1v1h-1zM298 224h1v1h-1zM298 205h1v1h-1zM298 186h1v1h-1zM298 166h1v1h-1zM317 825h1v1h-1zM317 806h1v1h-1zM317 786h1v1h-1zM317 767h1v1h-1zM317 748h1v1h-1zM317 728h1v1h-1zM317 709h1v1h-1zM317 689h1v1h-1zM317 670h1v1h-1zM317 651h1v1h-1zM317 631h1v1h-1zM317 612h1v1h-1zM317 593h1v1h-1zM317 573h1v1h-1zM317 554h1v1h-1zM317 534h1v1h-1zM317 515h1v1h-1zM317 496h1v1h-1zM317 476h1v1h-1zM317 457h1v1h-1zM317 438h1v1h-1zM317 418h1v1h-1zM317 399h1v1h-1zM317 379h1v1h-1zM317 360h1v1h-1zM317 341h1v1h-1zM317 321h1v1h-1zM317 302h1v1h-1zM317 283h1v1h-1zM317 263h1v1h-1zM317 244h1v1h-1zM317 224h1v1h-1zM317 205h1v1h-1zM317 186h1v1h-1zM317 166h1v1h-1zM337 825h1v1h-1zM337 806h1v1h-1zM337 786h1v1h-1zM337 767h1v1h-1zM337 748h1v1h-1zM337 728h1v1h-1zM337 709h1v1h-1zM337 689h1v1h-1zM337 670h1v1h-1zM337 651h1v1h-1zM337 631h1v1h-1zM337 612h1v1h-1zM337 593h1v1h-1zM337 573h1v1h-1zM337 554h1v1h-1zM337 534h1v1h-1zM337 515h1v1h-1zM337 496h1v1h-1zM337 476h1v1h-1zM337 457h1v1h-1zM337 438h1v1h-1zM337 418h1v1h-1zM337 399h1v1h-1zM337 379h1v1h-1zM337 360h1v1h-1zM337 341h1v1h-1zM337 321h1v1h-1zM337 302h1v1h-1zM337 283h1v1h-1zM337 263h1v1h-1zM337 244h1v1h-1zM337 224h1v1h-1zM337 205h1v1h-1zM337 186h1v1h-1zM337 166h1v1h-1zM356 825h1v1h-1zM356 806h1v1h-1zM356 786h1v1h-1zM356 767h1v1h-1zM356 748h1v1h-1zM356 728h1v1h-1zM356 709h1v1h-1zM356 689h1v1h-1zM356 670h1v1h-1zM356 651h1v1h-1zM356 631h1v1h-1zM356 612h1v1h-1zM356 593h1v1h-1zM356 573h1v1h-1zM356 554h1v1h-1zM356 534h1v1h-1zM356 515h1v1h-1zM356 496h1v1h-1zM356 476h1v1h-1zM356 457h1v1h-1zM356 438h1v1h-1zM356 418h1v1h-1zM356 399h1v1h-1zM356 379h1v1h-1zM356 360h1v1h-1zM356 341h1v1h-1zM356 321h1v1h-1zM356 302h1v1h-1zM356 283h1v1h-1zM356 263h1v1h-1zM356 244h1v1h-1zM356 224h1v1h-1zM356 205h1v1h-1zM356 186h1v1h-1zM356 166h1v1h-1zM375 825h1v1h-1zM375 806h1v1h-1zM375 786h1v1h-1zM375 767h1v1h-1zM375 748h1v1h-1zM375 728h1v1h-1zM375 709h1v1h-1zM375 689h1v1h-1zM375 670h1v1h-1zM375 651h1v1h-1zM375 631h1v1h-1zM375 612h1v1h-1zM375 593h1v1h-1zM375 573h1v1h-1zM375 554h1v1h-1zM375 534h1v1h-1zM375 515h1v1h-1zM375 496h1v1h-1zM375 476h1v1h-1zM375 457h1v1h-1zM375 438h1v1h-1zM375 418h1v1h-1zM375 399h1v1h-1zM375 379h1v1h-1zM375 360h1v1h-1zM375 341h1v1h-1zM375 321h1v1h-1zM375 302h1v1h-1zM375 283h1v1h-1zM375 263h1v1h-1zM375 244h1v1h-1zM375 224h1v1h-1zM375 205h1v1h-1zM375 186h1v1h-1zM375 166h1v1h-1zM395 825h1v1h-1zM395 806h1v1h-1zM395 786h1v1h-1zM395 767h1v1h-1zM395 748h1v1h-1zM395 728h1v1h-1zM395 709h1v1h-1zM395 689h1v1h-1zM395 670h1v1h-1zM395 651h1v1h-1zM395 631h1v1h-1zM395 612h1v1h-1zM395 593h1v1h-1zM395 573h1v1h-1zM395 554h1v1h-1zM395 534h1v1h-1zM395 515h1v1h-1zM395 496h1v1h-1zM395 476h1v1h-1zM395 457h1v1h-1zM395 438h1v1h-1zM395 418h1v1h-1zM395 399h1v1h-1zM395 379h1v1h-1zM395 360h1v1h-1zM395 341h1v1h-1zM395 321h1v1h-1zM395 302h1v1h-1zM395 283h1v1h-1zM395 263h1v1h-1zM395 244h1v1h-1zM395 224h1v1h-1zM395 205h1v1h-1zM395 186h1v1h-1zM395 166h1v1h-1zM414 825h1v1h-1zM414 806h1v1h-1zM414 786h1v1h-1zM414 767h1v1h-1zM414 748h1v1h-1zM414 728h1v1h-1zM414 709h1v1h-1zM414 689h1v1h-1zM414 670h1v1h-1zM414 651h1v1h-1zM414 631h1v1h-1zM414 612h1v1h-1zM414 593h1v1h-1zM414 573h1v1h-1zM414 554h1v1h-1zM414 534h1v1h-1zM414 515h1v1h-1zM414 496h1v1h-1zM414 476h1v1h-1zM414 457h1v1h-1zM414 438h1v1h-1zM414 418h1v1h-1zM414 399h1v1h-1zM414 379h1v1h-1zM414 360h1v1h-1zM414 341h1v1h-1zM414 321h1v1h-1zM414 302h1v1h-1zM414 283h1v1h-1zM414 263h1v1h-1zM414 244h1v1h-1zM414 224h1v1h-1zM414 205h1v1h-1zM414 186h1v1h-1zM414 166h1v1h-1zM433 825h1v1h-1zM433 806h1v1h-1zM433 786h1v1h-1zM433 767h1v1h-1zM433 748h1v1h-1zM433 728h1v1h-1zM433 709h1v1h-1zM433 689h1v1h-1zM433 670h1v1h-1zM433 651h1v1h-1zM433 631h1v1h-1zM433 612h1v1h-1zM433 593h1v1h-1zM433 573h1v1h-1zM433 554h1v1h-1zM433 534h1v1h-1zM433 515h1v1h-1zM433 496h1v1h-1zM433 476h1v1h-1zM433 457h1v1h-1zM433 438h1v1h-1zM433 418h1v1h-1zM433 399h1v1h-1zM433 379h1v1h-1zM433 360h1v1h-1zM433 341h1v1h-1zM433 321h1v1h-1zM433 302h1v1h-1zM433 283h1v1h-1zM433 263h1v1h-1zM433 244h1v1h-1zM433 224h1v1h-1zM433 205h1v1h-1zM433 186h1v1h-1zM433 166h1v1h-1zM453 825h1v1h-1zM453 806h1v1h-1zM453 786h1v1h-1zM453 767h1v1h-1zM453 748h1v1h-1zM453 728h1v1h-1zM453 709h1v1h-1zM453 689h1v1h-1zM453 670h1v1h-1zM453 651h1v1h-1zM453 631h1v1h-1zM453 612h1v1h-1zM453 593h1v1h-1zM453 573h1v1h-1zM453 554h1v1h-1zM453 534h1v1h-1zM453 515h1v1h-1zM453 496h1v1h-1zM453 476h1v1h-1zM453 457h1v1h-1zM453 438h1v1h-1zM453 418h1v1h-1zM453 399h1v1h-1zM453 379h1v1h-1zM453 360h1v1h-1zM453 341h1v1h-1zM453 321h1v1h-1zM453 302h1v1h-1zM453 283h1v1h-1zM453 263h1v1h-1zM453 244h1v1h-1zM453 224h1v1h-1zM453 205h1v1h-1zM453 186h1v1h-1zM453 166h1v1h-1zM472 825h1v1h-1zM472 806h1v1h-1zM472 786h1v1h-1zM472 767h1v1h-1zM472 748h1v1h-1zM472 728h1v1h-1zM472 709h1v1h-1zM472 689h1v1h-1zM472 670h1v1h-1zM472 651h1v1h-1zM472 631h1v1h-1zM472 612h1v1h-1zM472 593h1v1h-1zM472 573h1v1h-1zM472 554h1v1h-1zM472 534h1v1h-1zM472 515h1v1h-1zM472 496h1v1h-1zM472 476h1v1h-1zM472 457h1v1h-1zM472 438h1v1h-1zM472 418h1v1h-1zM472 399h1v1h-1zM472 379h1v1h-1zM472 360h1v1h-1zM472 341h1v1h-1zM472 321h1v1h-1zM472 302h1v1h-1zM472 283h1v1h-1zM472 263h1v1h-1zM472 244h1v1h-1zM472 224h1v1h-1zM472 205h1v1h-1zM472 186h1v1h-1zM472 166h1v1h-1zM492 825h1v1h-1zM492 806h1v1h-1zM492 786h1v1h-1zM492 767h1v1h-1zM492 748h1v1h-1zM492 728h1v1h-1zM492 709h1v1h-1zM492 689h1v1h-1zM492 670h1v1h-1zM492 651h1v1h-1zM492 631h1v1h-1zM492 612h1v1h-1zM492 593h1v1h-1zM492 573h1v1h-1zM492 554h1v1h-1zM492 534h1v1h-1zM492 515h1v1h-1zM492 496h1v1h-1zM492 476h1v1h-1zM492 457h1v1h-1zM492 438h1v1h-1zM492 418h1v1h-1zM492 399h1v1h-1zM492 379h1v1h-1zM492 360h1v1h-1zM492 341h1v1h-1zM492 321h1v1h-1zM492 302h1v1h-1zM492 283h1v1h-1zM492 263h1v1h-1zM492 244h1v1h-1zM492 224h1v1h-1zM492 205h1v1h-1zM492 186h1v1h-1zM492 166h1v1h-1zM511 825h1v1h-1zM511 806h1v1h-1zM511 786h1v1h-1zM511 767h1v1h-1zM511 748h1v1h-1zM511 728h1v1h-1zM511 709h1v1h-1zM511 689h1v1h-1zM511 670h1v1h-1zM511 651h1v1h-1zM511 631h1v1h-1zM511 612h1v1h-1zM511 593h1v1h-1zM511 573h1v1h-1zM511 554h1v1h-1zM511 534h1v1h-1zM511 515h1v1h-1zM511 496h1v1h-1zM511 476h1v1h-1zM511 457h1v1h-1zM511 438h1v1h-1zM511 418h1v1h-1zM511 399h1v1h-1zM511 379h1v1h-1zM511 360h1v1h-1zM511 341h1v1h-1zM511 321h1v1h-1zM511 302h1v1h-1zM511 283h1v1h-1zM511 263h1v1h-1zM511 244h1v1h-1zM511 224h1v1h-1zM511 205h1v1h-1zM511 186h1v1h-1zM511 166h1v1h-1zM530 825h1v1h-1zM530 806h1v1h-1zM530 786h1v1h-1zM530 767h1v1h-1zM530 748h1v1h-1zM530 728h1v1h-1zM530 709h1v1h-1zM530 689h1v1h-1zM530 670h1v1h-1zM530 651h1v1h-1zM530 631h1v1h-1zM530 612h1v1h-1zM530 593h1v1h-1zM530 573h1v1h-1zM530 554h1v1h-1zM530 534h1v1h-1zM530 515h1v1h-1zM530 496h1v1h-1zM530 476h1v1h-1zM530 457h1v1h-1zM530 438h1v1h-1zM530 418h1v1h-1zM530 399h1v1h-1zM530 379h1v1h-1zM530 360h1v1h-1zM530 341h1v1h-1zM530 321h1v1h-1zM530 302h1v1h-1zM530 283h1v1h-1zM530 263h1v1h-1zM530 244h1v1h-1zM530 224h1v1h-1zM530 205h1v1h-1zM530 186h1v1h-1zM530 166h1v1h-1zM550 825h1v1h-1zM550 806h1v1h-1zM550 786h1v1h-1zM550 767h1v1h-1zM550 748h1v1h-1zM550 728h1v1h-1zM550 709h1v1h-1zM550 689h1v1h-1zM550 670h1v1h-1zM550 651h1v1h-1zM550 631h1v1h-1zM550 612h1v1h-1zM550 593h1v1h-1zM550 573h1v1h-1zM550 554h1v1h-1zM550 534h1v1h-1zM550 515h1v1h-1zM550 496h1v1h-1zM550 476h1v1h-1zM550 457h1v1h-1zM550 438h1v1h-1zM550 418h1v1h-1zM550 399h1v1h-1zM550 379h1v1h-1zM550 360h1v1h-1zM550 341h1v1h-1zM550 321h1v1h-1zM550 302h1v1h-1zM550 283h1v1h-1zM550 263h1v1h-1zM550 244h1v1h-1zM550 224h1v1h-1zM550 205h1v1h-1zM550 186h1v1h-1zM550 166h1v1h-1zM569 825h1v1h-1zM569 806h1v1h-1zM569 786h1v1h-1zM569 767h1v1h-1zM569 748h1v1h-1zM569 728h1v1h-1zM569 709h1v1h-1zM569 689h1v1h-1zM569 670h1v1h-1zM569 651h1v1h-1zM569 631h1v1h-1zM569 612h1v1h-1zM569 593h1v1h-1zM569 573h1v1h-1zM569 554h1v1h-1zM569 534h1v1h-1zM569 515h1v1h-1zM569 496h1v1h-1zM569 476h1v1h-1zM569 457h1v1h-1zM569 438h1v1h-1zM569 418h1v1h-1zM569 399h1v1h-1zM569 379h1v1h-1zM569 360h1v1h-1zM569 341h1v1h-1zM569 321h1v1h-1zM569 302h1v1h-1zM569 283h1v1h-1zM569 263h1v1h-1zM569 244h1v1h-1zM569 224h1v1h-1zM569 205h1v1h-1zM569 186h1v1h-1zM569 166h1v1h-1zM588 825h1v1h-1zM588 806h1v1h-1zM588 786h1v1h-1zM588 767h1v1h-1zM588 748h1v1h-1zM588 728h1v1h-1zM588 709h1v1h-1zM588 689h1v1h-1zM588 670h1v1h-1zM588 651h1v1h-1zM588 631h1v1h-1zM588 612h1v1h-1zM588 593h1v1h-1zM588 573h1v1h-1zM588 554h1v1h-1zM588 534h1v1h-1zM588 515h1v1h-1zM588 496h1v1h-1zM588 476h1v1h-1zM588 457h1v1h-1zM588 438h1v1h-1zM588 418h1v1h-1zM588 399h1v1h-1zM588 379h1v1h-1zM588 360h1v1h-1zM588 341h1v1h-1zM588 321h1v1h-1zM588 302h1v1h-1zM588 283h1v1h-1zM588 263h1v1h-1zM588 244h1v1h-1zM588 224h1v1h-1zM588 205h1v1h-1zM588 186h1v1h-1zM588 166h1v1h-1zM608 825h1v1h-1zM608 806h1v1h-1zM608 786h1v1h-1zM608 767h1v1h-1zM608 748h1v1h-1zM608 728h1v1h-1zM608 709h1v1h-1zM608 689h1v1h-1zM608 670h1v1h-1zM608 651h1v1h-1zM608 631h1v1h-1zM608 612h1v1h-1zM608 593h1v1h-1zM608 573h1v1h-1zM608 554h1v1h-1zM608 534h1v1h-1zM608 515h1v1h-1zM608 496h1v1h-1zM608 476h1v1h-1zM608 457h1v1h-1zM608 438h1v1h-1zM608 418h1v1h-1zM608 399h1v1h-1zM608 379h1v1h-1zM608 360h1v1h-1zM608 341h1v1h-1zM608 321h1v1h-1zM608 302h1v1h-1zM608 283h1v1h-1zM608 263h1v1h-1zM608 244h1v1h-1zM608 224h1v1h-1zM608 205h1v1h-1zM608 186h1v1h-1zM608 166h1v1h-1zM627 825h1v1h-1zM627 806h1v1h-1zM627 786h1v1h-1zM627 767h1v1h-1zM627 748h1v1h-1zM627 728h1v1h-1zM627 709h1v1h-1zM627 689h1v1h-1zM627 670h1v1h-1zM627 651h1v1h-1zM627 631h1v1h-1zM627 612h1v1h-1zM627 593h1v1h-1zM627 573h1v1h-1zM627 554h1v1h-1zM627 534h1v1h-1zM627 515h1v1h-1zM627 496h1v1h-1zM627 476h1v1h-1zM627 457h1v1h-1zM627 438h1v1h-1zM627 418h1v1h-1zM627 399h1v1h-1zM627 379h1v1h-1zM627 360h1v1h-1zM627 341h1v1h-1zM627 321h1v1h-1zM627 302h1v1h-1zM627 283h1v1h-1zM627 263h1v1h-1zM627 244h1v1h-1zM627 224h1v1h-1zM627 205h1v1h-1zM627 186h1v1h-1zM627 166h1v1h-1zM647 825h1v1h-1zM647 806h1v1h-1zM647 786h1v1h-1zM647 767h1v1h-1zM647 748h1v1h-1zM647 728h1v1h-1zM647 709h1v1h-1zM647 689h1v1h-1zM647 670h1v1h-1zM647 651h1v1h-1zM647 631h1v1h-1zM647 612h1v1h-1zM647 593h1v1h-1zM647 573h1v1h-1zM647 554h1v1h-1zM647 534h1v1h-1zM647 515h1v1h-1zM647 496h1v1h-1zM647 476h1v1h-1zM647 457h1v1h-1zM647 438h1v1h-1zM647 418h1v1h-1zM647 399h1v1h-1zM647 379h1v1h-1zM647 360h1v1h-1zM647 341h1v1h-1zM647 321h1v1h-1zM647 302h1v1h-1zM647 283h1v1h-1zM647 263h1v1h-1zM647 244h1v1h-1zM647 224h1v1h-1zM647 205h1v1h-1zM647 186h1v1h-1zM647 166h1v1h-1zM666 825h1v1h-1zM666 806h1v1h-1zM666 786h1v1h-1zM666 767h1v1h-1zM666 748h1v1h-1zM666 728h1v1h-1zM666 709h1v1h-1zM666 689h1v1h-1zM666 670h1v1h-1zM666 651h1v1h-1zM666 631h1v1h-1zM666 612h1v1h-1zM666 593h1v1h-1zM666 573h1v1h-1zM666 554h1v1h-1zM666 534h1v1h-1zM666 515h1v1h-1zM666 496h1v1h-1zM666 476h1v1h-1zM666 457h1v1h-1zM666 438h1v1h-1zM666 418h1v1h-1zM666 399h1v1h-1zM666 379h1v1h-1zM666 360h1v1h-1zM666 341h1v1h-1zM666 321h1v1h-1zM666 302h1v1h-1zM666 283h1v1h-1zM666 263h1v1h-1zM666 244h1v1h-1zM666 224h1v1h-1zM666 205h1v1h-1zM666 186h1v1h-1zM666 166h1v1h-1zM685 825h1v1h-1zM685 806h1v1h-1zM685 786h1v1h-1zM685 767h1v1h-1zM685 748h1v1h-1zM685 728h1v1h-1zM685 709h1v1h-1zM685 689h1v1h-1zM685 670h1v1h-1zM685 651h1v1h-1zM685 631h1v1h-1zM685 612h1v1h-1zM685 593h1v1h-1zM685 573h1v1h-1zM685 554h1v1h-1zM685 534h1v1h-1zM685 515h1v1h-1zM685 496h1v1h-1zM685 476h1v1h-1zM685 457h1v1h-1zM685 438h1v1h-1zM685 418h1v1h-1zM685 399h1v1h-1zM685 379h1v1h-1zM685 360h1v1h-1zM685 341h1v1h-1zM685 321h1v1h-1zM685 302h1v1h-1zM685 283h1v1h-1zM685 263h1v1h-1zM685 244h1v1h-1zM685 224h1v1h-1zM685 205h1v1h-1zM685 186h1v1h-1zM685 166h1v1h-1zM705 825h1v1h-1zM705 806h1v1h-1zM705 786h1v1h-1zM705 767h1v1h-1zM705 748h1v1h-1zM705 728h1v1h-1zM705 709h1v1h-1zM705 689h1v1h-1zM705 670h1v1h-1zM705 651h1v1h-1zM705 631h1v1h-1zM705 612h1v1h-1zM705 593h1v1h-1zM705 573h1v1h-1zM705 554h1v1h-1zM705 534h1v1h-1zM705 515h1v1h-1zM705 496h1v1h-1zM705 476h1v1h-1zM705 457h1v1h-1zM705 438h1v1h-1zM705 418h1v1h-1zM705 399h1v1h-1zM705 379h1v1h-1zM705 360h1v1h-1zM705 341h1v1h-1zM705 321h1v1h-1zM705 302h1v1h-1zM705 283h1v1h-1zM705 263h1v1h-1zM705 244h1v1h-1zM705 224h1v1h-1zM705 205h1v1h-1zM705 186h1v1h-1zM705 166h1v1h-1zM724 825h1v1h-1zM724 806h1v1h-1zM724 786h1v1h-1zM724 767h1v1h-1zM724 748h1v1h-1zM724 728h1v1h-1zM724 709h1v1h-1zM724 689h1v1h-1zM724 670h1v1h-1zM724 651h1v1h-1zM724 631h1v1h-1zM724 612h1v1h-1zM724 593h1v1h-1zM724 573h1v1h-1zM724 554h1v1h-1zM724 534h1v1h-1zM724 515h1v1h-1zM724 496h1v1h-1zM724 476h1v1h-1zM724 457h1v1h-1zM724 438h1v1h-1zM724 418h1v1h-1zM724 399h1v1h-1zM724 379h1v1h-1zM724 360h1v1h-1zM724 341h1v1h-1zM724 321h1v1h-1zM724 302h1v1h-1zM724 283h1v1h-1zM724 263h1v1h-1zM724 244h1v1h-1zM724 224h1v1h-1zM724 205h1v1h-1zM724 186h1v1h-1zM724 166h1v1h-1zM743 825h1v1h-1zM743 806h1v1h-1zM743 786h1v1h-1zM743 767h1v1h-1zM743 748h1v1h-1zM743 728h1v1h-1zM743 709h1v1h-1zM743 689h1v1h-1zM743 670h1v1h-1zM743 651h1v1h-1zM743 631h1v1h-1zM743 612h1v1h-1zM743 593h1v1h-1zM743 573h1v1h-1zM743 554h1v1h-1zM743 534h1v1h-1zM743 515h1v1h-1zM743 496h1v1h-1zM743 476h1v1h-1zM743 457h1v1h-1zM743 438h1v1h-1zM743 418h1v1h-1zM743 399h1v1h-1zM743 379h1v1h-1zM743 360h1v1h-1zM743 341h1v1h-1zM743 321h1v1h-1zM743 302h1v1h-1zM743 283h1v1h-1zM743 263h1v1h-1zM743 244h1v1h-1zM743 224h1v1h-1zM743 205h1v1h-1zM743 186h1v1h-1zM743 166h1v1h-1zM763 825h1v1h-1zM763 806h1v1h-1zM763 786h1v1h-1zM763 767h1v1h-1zM763 748h1v1h-1zM763 728h1v1h-1zM763 709h1v1h-1zM763 689h1v1h-1zM763 670h1v1h-1zM763 651h1v1h-1zM763 631h1v1h-1zM763 612h1v1h-1zM763 593h1v1h-1zM763 573h1v1h-1zM763 554h1v1h-1zM763 534h1v1h-1zM763 515h1v1h-1zM763 496h1v1h-1zM763 476h1v1h-1zM763 457h1v1h-1zM763 438h1v1h-1zM763 418h1v1h-1zM763 399h1v1h-1zM763 379h1v1h-1zM763 360h1v1h-1zM763 341h1v1h-1zM763 321h1v1h-1zM763 302h1v1h-1zM763 283h1v1h-1zM763 263h1v1h-1zM763 244h1v1h-1zM763 224h1v1h-1zM763 205h1v1h-1zM763 186h1v1h-1zM763 166h1v1h-1zM782 825h1v1h-1zM782 806h1v1h-1zM782 786h1v1h-1zM782 767h1v1h-1zM782 748h1v1h-1zM782 728h1v1h-1zM782 709h1v1h-1zM782 689h1v1h-1zM782 670h1v1h-1zM782 651h1v1h-1zM782 631h1v1h-1zM782 612h1v1h-1zM782 593h1v1h-1zM782 573h1v1h-1zM782 554h1v1h-1zM782 534h1v1h-1zM782 515h1v1h-1zM782 496h1v1h-1zM782 476h1v1h-1zM782 457h1v1h-1zM782 438h1v1h-1zM782 418h1v1h-1zM782 399h1v1h-1zM782 379h1v1h-1zM782 360h1v1h-1zM782 341h1v1h-1zM782 321h1v1h-1zM782 302h1v1h-1zM782 283h1v1h-1zM782 263h1v1h-1zM782 244h1v1h-1zM782 224h1v1h-1zM782 205h1v1h-1zM782 186h1v1h-1zM782 166h1v1h-1zM802 825h1v1h-1zM802 806h1v1h-1zM802 786h1v1h-1zM802 767h1v1h-1zM802 748h1v1h-1zM802 728h1v1h-1zM802 709h1v1h-1zM802 689h1v1h-1zM802 670h1v1h-1zM802 651h1v1h-1zM802 631h1v1h-1zM802 612h1v1h-1zM802 593h1v1h-1zM802 573h1v1h-1zM802 554h1v1h-1zM802 534h1v1h-1zM802 515h1v1h-1zM802 496h1v1h-1zM802 476h1v1h-1zM802 457h1v1h-1zM802 438h1v1h-1zM802 418h1v1h-1zM802 399h1v1h-1zM802 379h1v1h-1zM802 360h1v1h-1zM802 341h1v1h-1zM802 321h1v1h-1zM802 302h1v1h-1zM802 283h1v1h-1zM802 263h1v1h-1zM802 244h1v1h-1zM802 224h1v1h-1zM802 205h1v1h-1zM802 186h1v1h-1zM802 166h1v1h-1zM821 825h1v1h-1zM821 806h1v1h-1zM821 786h1v1h-1zM821 767h1v1h-1zM821 748h1v1h-1zM821 728h1v1h-1zM821 709h1v1h-1zM821 689h1v1h-1zM821 670h1v1h-1zM821 651h1v1h-1zM821 631h1v1h-1zM821 612h1v1h-1zM821 593h1v1h-1zM821 573h1v1h-1zM821 554h1v1h-1zM821 534h1v1h-1zM821 515h1v1h-1zM821 496h1v1h-1zM821 476h1v1h-1zM821 457h1v1h-1zM821 438h1v1h-1zM821 418h1v1h-1zM821 399h1v1h-1zM821 379h1v1h-1zM821 360h1v1h-1zM821 341h1v1h-1zM821 321h1v1h-1zM821 302h1v1h-1zM821 283h1v1h-1zM821 263h1v1h-1zM821 244h1v1h-1zM821 224h1v1h-1zM821 205h1v1h-1zM821 186h1v1h-1zM821 166h1v1h-1zM840 825h1v1h-1zM840 806h1v1h-1zM840 786h1v1h-1zM840 767h1v1h-1zM840 748h1v1h-1zM840 728h1v1h-1zM840 709h1v1h-1zM840 689h1v1h-1zM840 670h1v1h-1zM840 651h1v1h-1zM840 631h1v1h-1zM840 612h1v1h-1zM840 593h1v1h-1zM840 573h1v1h-1zM840 554h1v1h-1zM840 534h1v1h-1zM840 515h1v1h-1zM840 496h1v1h-1zM840 476h1v1h-1zM840 457h1v1h-1zM840 438h1v1h-1zM840 418h1v1h-1zM840 399h1v1h-1zM840 379h1v1h-1zM840 360h1v1h-1zM840 341h1v1h-1zM840 321h1v1h-1zM840 302h1v1h-1zM840 283h1v1h-1zM840 263h1v1h-1zM840 244h1v1h-1zM840 224h1v1h-1zM840 205h1v1h-1zM840 186h1v1h-1zM840 166h1v1h-1zM860 825h1v1h-1zM860 806h1v1h-1zM860 786h1v1h-1zM860 767h1v1h-1zM860 748h1v1h-1zM860 728h1v1h-1zM860 709h1v1h-1zM860 689h1v1h-1zM860 670h1v1h-1zM860 651h1v1h-1zM860 631h1v1h-1zM860 612h1v1h-1zM860 593h1v1h-1zM860 573h1v1h-1zM860 554h1v1h-1zM860 534h1v1h-1zM860 515h1v1h-1zM860 496h1v1h-1zM860 476h1v1h-1zM860 457h1v1h-1zM860 438h1v1h-1zM860 418h1v1h-1zM860 399h1v1h-1zM860 379h1v1h-1zM860 360h1v1h-1zM860 341h1v1h-1zM860 321h1v1h-1zM860 302h1v1h-1zM860 283h1v1h-1zM860 263h1v1h-1zM860 244h1v1h-1zM860 224h1v1h-1zM860 205h1v1h-1zM860 186h1v1h-1zM860 166h1v1h-1zM879 825h1v1h-1zM879 806h1v1h-1zM879 786h1v1h-1zM879 767h1v1h-1zM879 748h1v1h-1zM879 728h1v1h-1zM879 709h1v1h-1zM879 689h1v1h-1zM879 670h1v1h-1zM879 651h1v1h-1zM879 631h1v1h-1zM879 612h1v1h-1zM879 593h1v1h-1zM879 573h1v1h-1zM879 554h1v1h-1zM879 534h1v1h-1zM879 515h1v1h-1zM879 496h1v1h-1zM879 476h1v1h-1zM879 457h1v1h-1zM879 438h1v1h-1zM879 418h1v1h-1zM879 399h1v1h-1zM879 379h1v1h-1zM879 360h1v1h-1zM879 341h1v1h-1zM879 321h1v1h-1zM879 302h1v1h-1zM879 283h1v1h-1zM879 263h1v1h-1zM879 244h1v1h-1zM879 224h1v1h-1zM879 205h1v1h-1zM879 186h1v1h-1zM879 166h1v1h-1zM898 825h1v1h-1zM898 806h1v1h-1zM898 786h1v1h-1zM898 767h1v1h-1zM898 748h1v1h-1zM898 728h1v1h-1zM898 709h1v1h-1zM898 689h1v1h-1zM898 670h1v1h-1zM898 651h1v1h-1zM898 631h1v1h-1zM898 612h1v1h-1zM898 593h1v1h-1zM898 573h1v1h-1zM898 554h1v1h-1zM898 534h1v1h-1zM898 515h1v1h-1zM898 496h1v1h-1zM898 476h1v1h-1zM898 457h1v1h-1zM898 438h1v1h-1zM898 418h1v1h-1zM898 399h1v1h-1zM898 379h1v1h-1zM898 360h1v1h-1zM898 341h1v1h-1zM898 321h1v1h-1zM898 302h1v1h-1zM898 283h1v1h-1zM898 263h1v1h-1zM898 244h1v1h-1zM898 224h1v1h-1zM898 205h1v1h-1zM898 186h1v1h-1zM898 166h1v1h-1zM918 825h1v1h-1zM918 806h1v1h-1zM918 786h1v1h-1zM918 767h1v1h-1zM918 748h1v1h-1zM918 728h1v1h-1zM918 709h1v1h-1zM918 689h1v1h-1zM918 670h1v1h-1zM918 651h1v1h-1zM918 631h1v1h-1zM918 612h1v1h-1zM918 593h1v1h-1zM918 573h1v1h-1zM918 554h1v1h-1zM918 534h1v1h-1zM918 515h1v1h-1zM918 496h1v1h-1zM918 476h1v1h-1zM918 457h1v1h-1zM918 438h1v1h-1zM918 418h1v1h-1zM918 399h1v1h-1zM918 379h1v1h-1zM918 360h1v1h-1zM918 341h1v1h-1zM918 321h1v1h-1zM918 302h1v1h-1zM918 283h1v1h-1zM918 263h1v1h-1zM918 244h1v1h-1zM918 224h1v1h-1zM918 205h1v1h-1zM918 186h1v1h-1zM918 166h1v1h-1zM937 825h1v1h-1zM937 806h1v1h-1zM937 786h1v1h-1zM937 767h1v1h-1zM937 748h1v1h-1zM937 728h1v1h-1zM937 709h1v1h-1zM937 689h1v1h-1zM937 670h1v1h-1zM937 651h1v1h-1zM937 631h1v1h-1zM937 612h1v1h-1zM937 593h1v1h-1zM937 573h1v1h-1zM937 554h1v1h-1zM937 534h1v1h-1zM937 515h1v1h-1zM937 496h1v1h-1zM937 476h1v1h-1zM937 457h1v1h-1zM937 438h1v1h-1zM937 418h1v1h-1zM937 399h1v1h-1zM937 379h1v1h-1zM937 360h1v1h-1zM937 341h1v1h-1zM937 321h1v1h-1zM937 302h1v1h-1zM937 283h1v1h-1zM937 263h1v1h-1zM937 244h1v1h-1zM937 224h1v1h-1zM937 205h1v1h-1zM937 186h1v1h-1zM937 166h1v1h-1zM957 825h1v1h-1zM957 806h1v1h-1zM957 786h1v1h-1zM957 767h1v1h-1zM957 748h1v1h-1zM957 728h1v1h-1zM957 709h1v1h-1zM957 689h1v1h-1zM957 670h1v1h-1zM957 651h1v1h-1zM957 631h1v1h-1zM957 612h1v1h-1zM957 593h1v1h-1zM957 573h1v1h-1zM957 554h1v1h-1zM957 534h1v1h-1zM957 515h1v1h-1zM957 496h1v1h-1zM957 476h1v1h-1zM957 457h1v1h-1zM957 438h1v1h-1zM957 418h1v1h-1zM957 399h1v1h-1zM957 379h1v1h-1zM957 360h1v1h-1zM957 341h1v1h-1zM957 321h1v1h-1zM957 302h1v1h-1zM957 283h1v1h-1zM957 263h1v1h-1zM957 244h1v1h-1zM957 224h1v1h-1zM957 205h1v1h-1zM957 186h1v1h-1zM957 166h1v1h-1zM976 825h1v1h-1zM976 806h1v1h-1zM976 786h1v1h-1zM976 767h1v1h-1zM976 748h1v1h-1zM976 728h1v1h-1zM976 709h1v1h-1zM976 689h1v1h-1zM976 670h1v1h-1zM976 651h1v1h-1zM976 631h1v1h-1zM976 612h1v1h-1zM976 593h1v1h-1zM976 573h1v1h-1zM976 554h1v1h-1zM976 534h1v1h-1zM976 515h1v1h-1zM976 496h1v1h-1zM976 476h1v1h-1zM976 457h1v1h-1zM976 438h1v1h-1zM976 418h1v1h-1zM976 399h1v1h-1zM976 379h1v1h-1zM976 360h1v1h-1zM976 341h1v1h-1zM976 321h1v1h-1zM976 302h1v1h-1zM976 283h1v1h-1zM976 263h1v1h-1zM976 244h1v1h-1zM976 224h1v1h-1zM976 205h1v1h-1zM976 186h1v1h-1zM976 166h1v1h-1zM995 825h1v1h-1zM995 806h1v1h-1zM995 786h1v1h-1zM995 767h1v1h-1zM995 748h1v1h-1zM995 728h1v1h-1zM995 709h1v1h-1zM995 689h1v1h-1zM995 670h1v1h-1zM995 651h1v1h-1zM995 631h1v1h-1zM995 612h1v1h-1zM995 593h1v1h-1zM995 573h1v1h-1zM995 554h1v1h-1zM995 534h1v1h-1zM995 515h1v1h-1zM995 496h1v1h-1zM995 476h1v1h-1zM995 457h1v1h-1zM995 438h1v1h-1zM995 418h1v1h-1zM995 399h1v1h-1zM995 379h1v1h-1zM995 360h1v1h-1zM995 341h1v1h-1zM995 321h1v1h-1zM995 302h1v1h-1zM995 283h1v1h-1zM995 263h1v1h-1zM995 244h1v1h-1zM995 224h1v1h-1zM995 205h1v1h-1zM995 186h1v1h-1zM995 166h1v1h-1zM1015 825h1v1h-1zM1015 806h1v1h-1zM1015 786h1v1h-1zM1015 767h1v1h-1zM1015 748h1v1h-1zM1015 728h1v1h-1zM1015 709h1v1h-1zM1015 689h1v1h-1zM1015 670h1v1h-1zM1015 651h1v1h-1zM1015 631h1v1h-1zM1015 612h1v1h-1zM1015 593h1v1h-1zM1015 573h1v1h-1zM1015 554h1v1h-1zM1015 534h1v1h-1zM1015 515h1v1h-1zM1015 496h1v1h-1zM1015 476h1v1h-1zM1015 457h1v1h-1zM1015 438h1v1h-1zM1015 418h1v1h-1zM1015 399h1v1h-1zM1015 379h1v1h-1zM1015 360h1v1h-1zM1015 341h1v1h-1zM1015 321h1v1h-1zM1015 302h1v1h-1zM1015 283h1v1h-1zM1015 263h1v1h-1zM1015 244h1v1h-1zM1015 224h1v1h-1zM1015 205h1v1h-1zM1015 186h1v1h-1zM1015 166h1v1h-1zM1034 825h1v1h-1zM1034 806h1v1h-1zM1034 786h1v1h-1zM1034 767h1v1h-1zM1034 748h1v1h-1zM1034 728h1v1h-1zM1034 709h1v1h-1zM1034 689h1v1h-1zM1034 670h1v1h-1zM1034 651h1v1h-1zM1034 631h1v1h-1zM1034 612h1v1h-1zM1034 593h1v1h-1zM1034 573h1v1h-1zM1034 554h1v1h-1zM1034 534h1v1h-1zM1034 515h1v1h-1zM1034 496h1v1h-1zM1034 476h1v1h-1zM1034 457h1v1h-1zM1034 438h1v1h-1zM1034 418h1v1h-1zM1034 399h1v1h-1zM1034 379h1v1h-1zM1034 360h1v1h-1zM1034 341h1v1h-1zM1034 321h1v1h-1zM1034 302h1v1h-1zM1034 283h1v1h-1zM1034 263h1v1h-1zM1034 244h1v1h-1zM1034 224h1v1h-1zM1034 205h1v1h-1zM1034 186h1v1h-1zM1034 166h1v1h-1zM1053 825h1v1h-1zM1053 806h1v1h-1zM1053 786h1v1h-1zM1053 767h1v1h-1zM1053 748h1v1h-1zM1053 728h1v1h-1zM1053 709h1v1h-1zM1053 689h1v1h-1zM1053 670h1v1h-1zM1053 651h1v1h-1zM1053 631h1v1h-1zM1053 612h1v1h-1zM1053 593h1v1h-1zM1053 573h1v1h-1zM1053 554h1v1h-1zM1053 534h1v1h-1zM1053 515h1v1h-1zM1053 496h1v1h-1zM1053 476h1v1h-1zM1053 457h1v1h-1zM1053 438h1v1h-1zM1053 418h1v1h-1zM1053 399h1v1h-1zM1053 379h1v1h-1zM1053 360h1v1h-1zM1053 341h1v1h-1zM1053 321h1v1h-1zM1053 302h1v1h-1zM1053 283h1v1h-1zM1053 263h1v1h-1zM1053 244h1v1h-1zM1053 224h1v1h-1zM1053 205h1v1h-1zM1053 186h1v1h-1zM1053 166h1v1h-1zM1073 825h1v1h-1zM1073 806h1v1h-1zM1073 786h1v1h-1zM1073 767h1v1h-1zM1073 748h1v1h-1zM1073 728h1v1h-1zM1073 709h1v1h-1zM1073 689h1v1h-1zM1073 670h1v1h-1zM1073 651h1v1h-1zM1073 631h1v1h-1zM1073 612h1v1h-1zM1073 593h1v1h-1zM1073 573h1v1h-1zM1073 554h1v1h-1zM1073 534h1v1h-1zM1073 515h1v1h-1zM1073 496h1v1h-1zM1073 476h1v1h-1zM1073 457h1v1h-1zM1073 438h1v1h-1zM1073 418h1v1h-1zM1073 399h1v1h-1zM1073 379h1v1h-1zM1073 360h1v1h-1zM1073 341h1v1h-1zM1073 321h1v1h-1zM1073 302h1v1h-1zM1073 283h1v1h-1zM1073 263h1v1h-1zM1073 244h1v1h-1zM1073 224h1v1h-1zM1073 205h1v1h-1zM1073 186h1v1h-1zM1073 166h1v1h-1zM1092 825h1v1h-1zM1092 806h1v1h-1zM1092 786h1v1h-1zM1092 767h1v1h-1zM1092 748h1v1h-1zM1092 728h1v1h-1zM1092 709h1v1h-1zM1092 689h1v1h-1zM1092 670h1v1h-1zM1092 651h1v1h-1zM1092 631h1v1h-1zM1092 612h1v1h-1zM1092 593h1v1h-1zM1092 573h1v1h-1zM1092 554h1v1h-1zM1092 534h1v1h-1zM1092 515h1v1h-1zM1092 496h1v1h-1zM1092 476h1v1h-1zM1092 457h1v1h-1zM1092 438h1v1h-1zM1092 418h1v1h-1zM1092 399h1v1h-1zM1092 379h1v1h-1zM1092 360h1v1h-1zM1092 341h1v1h-1zM1092 321h1v1h-1zM1092 302h1v1h-1zM1092 283h1v1h-1zM1092 263h1v1h-1zM1092 244h1v1h-1zM1092 224h1v1h-1zM1092 205h1v1h-1zM1092 186h1v1h-1zM1092 166h1v1h-1z"/><g fill="none" stroke="#fff" stroke-width="0.99" shape-rendering="crispEdges"><path d="M200.9 205.1L278.4 282.6L200.9 360.1L123.4 282.6L200.9 205.1M162.2 243.8L181.6 243.8M220.3 243.8L239.7 243.8M239.7 321.3L239.7 301.9M239.7 263.2L239.7 243.8M162.2 321.3L181.6 321.3M220.3 321.3L239.7 321.3M162.2 321.3L162.2 301.9M162.2 263.2L162.2 243.8M162.2 243.8L239.7 321.3M162.2 321.3L239.7 243.8M200.9 205.1L200.9 224.4M200.9 263.2L200.9 301.9M200.9 340.7L200.9 360.1M278.4 282.6L259.1 282.6M220.3 282.6L181.6 282.6M142.8 282.6L123.4 282.6M394.7 205.1L472.2 282.6L394.7 360.1L317.2 282.6L394.7 205.1M355.9 243.8L375.3 243.8M414.1 243.8L433.4 243.8M433.4 321.3L433.4 301.9M433.4 263.2L433.4 243.8M355.9 321.3L375.3 321.3M414.1 321.3L433.4 321.3M355.9 321.3L355.9 301.9M355.9 263.2L355.9 243.8M355.9 243.8L433.4 321.3M355.9 321.3L433.4 243.8M394.7 205.1L394.7 224.4M394.7 263.2L394.7 301.9M394.7 340.7L394.7 360.1M472.2 282.6L452.8 282.6M414.1 282.6L375.3 282.6M336.6 282.6L317.2 282.6M394.7 223.9C394.7 225.6 395.2 226.7 396.5 228M396.5 228L410.5 242M410.5 242C411.8 243.3 412.9 243.8 414.7 243.8M414.7 243.8C412.9 243.8 411.8 244.4 410.5 245.6M410.5 245.6L396.5 259.7M396.5 259.7C395.2 260.9 394.7 262 394.7 263.8M394.7 263.8C394.7 262 394.1 260.9 392.9 259.7M392.9 259.7L378.8 245.6M378.8 245.6C377.6 244.4 376.5 243.8 374.7 243.8M374.7 243.8C376.5 243.8 377.6 243.3 378.8 242M378.8 242L392.9 228M392.9 228C394.1 226.7 394.7 225.6 394.7 223.9M394.7 301.4C394.7 303.1 395.2 304.2 396.5 305.5M396.5 305.5L410.5 319.5M410.5 319.5C411.8 320.8 412.9 321.3 414.7 321.3M414.7 321.3C412.9 321.3 411.8 321.9 410.5 323.1M410.5 323.1L396.5 337.2M396.5 337.2C395.2 338.4 394.7 339.5 394.7 341.3M394.7 341.3C394.7 339.5 394.1 338.4 392.9 337.2M392.9 337.2L378.8 323.1M378.8 323.1C377.6 321.9 376.5 321.3 374.7 321.3M374.7 321.3C376.5 321.3 377.6 320.8 378.8 319.5M378.8 319.5L392.9 305.5M392.9 305.5C394.1 304.2 394.7 303.1 394.7 301.4M433.4 262.6C433.4 264.4 434 265.5 435.2 266.7M435.2 266.7L449.3 280.8M449.3 280.8C450.5 282 451.7 282.6 453.4 282.6M453.4 282.6C451.7 282.6 450.5 283.1 449.3 284.3M449.3 284.3L435.2 298.4M435.2 298.4C434 299.6 433.4 300.8 433.4 302.5M433.4 302.5C433.4 300.8 432.9 299.6 431.7 298.4M431.7 298.4L417.6 284.3M417.6 284.3C416.4 283.1 415.2 282.6 413.5 282.6M413.5 282.6C415.2 282.6 416.4 282 417.6 280.8M417.6 280.8L431.7 266.7M431.7 266.7C432.9 265.5 433.4 264.4 433.4 262.6M355.9 262.6C355.9 264.4 356.5 265.5 357.7 266.7M357.7 266.7L371.8 280.8M371.8 280.8C373 282 374.2 282.6 375.9 282.6M375.9 282.6C374.2 282.6 373 283.1 371.8 284.3M371.8 284.3L357.7 298.4M357.7 298.4C356.5 299.6 355.9 300.8 355.9 302.5M355.9 302.5C355.9 300.8 355.4 299.6 354.2 298.4M354.2 298.4L340.1 284.3M340.1 284.3C338.9 283.1 337.7 282.6 336 282.6M336 282.6C337.7 282.6 338.9 282 340.1 280.8M340.1 280.8L354.2 266.7M354.2 266.7C355.4 265.5 355.9 264.4 355.9 262.6M588.4 205.1L611.1 227.8L643.2 227.8L643.2 259.9L665.9 282.6L643.2 305.3L643.2 337.4L611.1 337.4L588.4 360.1L565.7 337.4L533.6 337.4L533.6 305.3L510.9 282.6L533.6 259.9L533.6 227.8L565.7 227.8L588.4 205.1M645 282.6Q642.7 282.6 640.2 279.6M640.2 279.6L632.3 271.6M632.3 271.6A9.7 9.7 0 0 0 618.6 271.6M618.6 271.6L607.6 282.6M645 282.6Q642.7 282.6 640.2 285.6M640.2 285.6L632.3 293.5M632.3 293.5A9.7 9.7 0 0 1 618.6 293.5M618.6 293.5L607.6 282.6M645 282.6L648.9 282.6M607.6 282.6L588.4 282.6M628.4 242.6Q626.8 244.2 622.9 243.8M622.9 243.8L611.7 243.8M611.7 243.8A9.7 9.7 0 0 0 602 253.5M602 253.5L602 269M628.4 242.6Q626.8 244.2 627.2 248.1M627.2 248.1L627.2 259.3M627.2 259.3A9.7 9.7 0 0 1 617.5 269M617.5 269L602 269M628.4 242.6L631.2 239.8M602 269L588.4 282.6M588.4 226Q588.4 228.3 585.4 230.8M585.4 230.8L577.5 238.7M577.5 238.7A9.7 9.7 0 0 0 577.5 252.4M577.5 252.4L588.4 263.4M588.4 226Q588.4 228.3 591.5 230.8M591.5 230.8L599.4 238.7M599.4 238.7A9.7 9.7 0 0 1 599.4 252.4M599.4 252.4L588.4 263.4M588.4 226L588.4 222.1M588.4 263.4L588.4 282.6M548.4 242.6Q550.1 244.2 549.7 248.1M549.7 248.1L549.7 259.3M549.7 259.3A9.7 9.7 0 0 0 559.4 269M559.4 269L574.9 269M548.4 242.6Q550.1 244.2 554 243.8M554 243.8L565.2 243.8M565.2 243.8A9.7 9.7 0 0 1 574.9 253.5M574.9 253.5L574.9 269M548.4 242.6L545.7 239.8M574.9 269L588.4 282.6M531.9 282.6Q534.2 282.6 536.7 285.6M536.7 285.6L544.6 293.5M544.6 293.5A9.7 9.7 0 0 0 558.3 293.5M558.3 293.5L569.3 282.6M531.9 282.6Q534.2 282.6 536.7 279.6M536.7 279.6L544.6 271.6M544.6 271.6A9.7 9.7 0 0 1 558.3 271.6M558.3 271.6L569.3 282.6M531.9 282.6L528 282.6M569.3 282.6L588.4 282.6M548.4 322.6Q550.1 320.9 554 321.3M554 321.3L565.2 321.3M565.2 321.3A9.7 9.7 0 0 0 574.9 311.6M574.9 311.6L574.9 296.1M548.4 322.6Q550.1 320.9 549.7 317.1M549.7 317.1L549.7 305.8M549.7 305.8A9.7 9.7 0 0 1 559.4 296.1M559.4 296.1L574.9 296.1M548.4 322.6L545.7 325.3M574.9 296.1L588.4 282.6M588.4 339.1Q588.4 336.8 591.5 334.4M591.5 334.4L599.4 326.4M599.4 326.4A9.7 9.7 0 0 0 599.4 312.7M599.4 312.7L588.4 301.7M588.4 339.1Q588.4 336.8 585.4 334.4M585.4 334.4L577.5 326.4M577.5 326.4A9.7 9.7 0 0 1 577.5 312.7M577.5 312.7L588.4 301.7M588.4 339.1L588.4 343M588.4 301.7L588.4 282.6M628.4 322.6Q626.8 320.9 627.2 317.1M627.2 317.1L627.2 305.8M627.2 305.8A9.7 9.7 0 0 0 617.5 296.1M617.5 296.1L602 296.1M628.4 322.6Q626.8 320.9 622.9 321.3M622.9 321.3L611.7 321.3M611.7 321.3A9.7 9.7 0 0 1 602 311.6M602 311.6L602 296.1M628.4 322.6L631.2 325.3M602 296.1L588.4 282.6M782.2 200.4L864.4 282.6L782.2 364.8L700 282.6L782.2 200.4M741.1 241.5L823.3 323.7M741.1 323.7L823.3 241.5M782.2 200.4A41.1 41.1 0 0 0 823.3 241.5M823.3 241.5A41.1 41.1 0 0 0 864.4 282.6M823.3 323.7A41.1 41.1 0 0 0 782.2 364.8M864.4 282.6A41.1 41.1 0 0 0 823.3 323.7M741.1 241.5A41.1 41.1 0 0 0 782.2 200.4M700 282.6A41.1 41.1 0 0 0 741.1 241.5M782.2 364.8A41.1 41.1 0 0 0 741.1 323.7M741.1 323.7A41.1 41.1 0 0 0 700 282.6M782.2 282.6A41.1 41.1 0 0 0 823.3 241.5M741.1 241.5A41.1 41.1 0 0 0 782.2 282.6M823.3 323.7A41.1 41.1 0 0 0 782.2 282.6M782.2 282.6A41.1 41.1 0 0 0 741.1 323.7M823.3 241.5A41.1 41.1 0 0 0 782.2 282.6M782.2 282.6A41.1 41.1 0 0 0 823.3 323.7M782.2 282.6A41.1 41.1 0 0 0 741.1 241.5M741.1 323.7A41.1 41.1 0 0 0 782.2 282.6M975.9 200.4L1000 224.4L1034.1 224.4L1034.1 258.5L1058.1 282.6L1034.1 306.6L1034.1 340.7L1000 340.7L975.9 364.8L951.9 340.7L917.8 340.7L917.8 306.6L893.7 282.6L917.8 258.5L917.8 224.4L951.9 224.4L975.9 200.4M975.9 200.4A41.1 41.1 0 0 0 1017 241.5M1017 241.5A41.1 41.1 0 0 0 1058.1 282.6M1017 323.7A41.1 41.1 0 0 0 975.9 364.8M1058.1 282.6A41.1 41.1 0 0 0 1017 323.7M934.8 241.5A41.1 41.1 0 0 0 975.9 200.4M893.7 282.6A41.1 41.1 0 0 0 934.8 241.5M975.9 364.8A41.1 41.1 0 0 0 934.8 323.7M934.8 323.7A41.1 41.1 0 0 0 893.7 282.6M975.9 282.6A41.1 41.1 0 0 0 1017 241.5M934.8 241.5A41.1 41.1 0 0 0 975.9 282.6M1017 323.7A41.1 41.1 0 0 0 975.9 282.6M975.9 282.6A41.1 41.1 0 0 0 934.8 323.7M1017 241.5A41.1 41.1 0 0 0 975.9 282.6M975.9 282.6A41.1 41.1 0 0 0 1017 323.7M975.9 282.6A41.1 41.1 0 0 0 934.8 241.5M934.8 323.7A41.1 41.1 0 0 0 975.9 282.6M917.8 224.4A41.1 41.1 0 0 0 975.9 224.4M975.9 224.4A41.1 41.1 0 0 0 1034.1 224.4M1034.1 282.6A41.1 41.1 0 0 0 1034.1 340.7M1034.1 224.4A41.1 41.1 0 0 0 1034.1 282.6M917.8 282.6A41.1 41.1 0 0 0 917.8 224.4M917.8 340.7A41.1 41.1 0 0 0 917.8 282.6M1034.1 340.7A41.1 41.1 0 0 0 975.9 340.7M975.9 340.7A41.1 41.1 0 0 0 917.8 340.7M975.9 282.6A41.1 41.1 0 0 0 975.9 224.4M917.8 282.6A41.1 41.1 0 0 0 975.9 282.6M1034.1 282.6A41.1 41.1 0 0 0 975.9 282.6M975.9 282.6A41.1 41.1 0 0 0 975.9 340.7M975.9 224.4A41.1 41.1 0 0 0 975.9 282.6M975.9 282.6A41.1 41.1 0 0 0 1034.1 282.6M975.9 282.6A41.1 41.1 0 0 0 917.8 282.6M975.9 340.7A41.1 41.1 0 0 0 975.9 282.6M206.7 398L284.2 475.5L206.7 553L129.2 475.5L206.7 398M167.9 436.8L187.3 436.8M226 436.8L245.4 436.8M245.4 514.3L245.4 494.9M245.4 456.2L245.4 436.8M167.9 514.3L187.3 514.3M226 514.3L245.4 514.3M167.9 514.3L167.9 494.9M167.9 456.2L167.9 436.8M167.9 436.8L245.4 514.3M167.9 514.3L245.4 436.8M206.7 398L206.7 417.4M206.7 456.2L206.7 494.9M206.7 533.7L206.7 553M284.2 475.5L264.8 475.5M226 475.5L187.3 475.5M148.5 475.5L129.2 475.5M206.7 417.4L226 436.8L206.7 456.2L187.3 436.8L206.7 417.4M206.7 494.9L226 514.3L206.7 533.7L187.3 514.3L206.7 494.9M245.4 456.2L264.8 475.5L245.4 494.9L226 475.5L245.4 456.2M167.9 456.2L187.3 475.5L167.9 494.9L148.5 475.5L167.9 456.2M394.7 398.8L472.2 476.3L394.7 553.8L317.2 476.3L394.7 398.8M355.9 437.6L433.4 437.6L433.4 515.1L355.9 515.1L355.9 437.6M355.9 437.6L433.4 515.1M355.9 515.1L433.4 437.6M394.7 398.8L394.7 418.2M394.7 456.9L394.7 495.7M394.7 534.4L394.7 553.8M472.2 476.3L452.8 476.3M414.1 476.3L375.3 476.3M336.6 476.3L317.2 476.3M394.7 418.2L414.1 437.6L394.7 456.9L375.3 437.6L394.7 418.2M394.7 495.7L414.1 515.1L394.7 534.4L375.3 515.1L394.7 495.7M433.4 456.9L452.8 476.3L433.4 495.7L414.1 476.3L433.4 456.9M355.9 456.9L375.3 476.3L355.9 495.7L336.6 476.3L355.9 456.9M375.3 418.2L452.8 495.7M336.6 456.9L414.1 534.4M414.1 418.2L336.6 495.7M452.8 456.9L375.3 534.4M588.4 398.8L665.9 476.3L588.4 553.8L510.9 476.3L588.4 398.8M549.7 437.6L569.1 437.6M607.8 437.6L627.2 437.6M627.2 515.1L627.2 495.7M627.2 456.9L627.2 437.6M549.7 515.1L569.1 515.1M607.8 515.1L627.2 515.1M549.7 515.1L549.7 495.7M549.7 456.9L549.7 437.6M549.7 437.6L627.2 515.1M549.7 515.1L627.2 437.6M588.4 398.8L588.4 418.2M588.4 456.9L588.4 495.7M588.4 534.4L588.4 553.8M665.9 476.3L646.6 476.3M607.8 476.3L569.1 476.3M530.3 476.3L510.9 476.3M588.4 418.2L607.8 437.6L588.4 456.9L569.1 437.6L588.4 418.2M588.4 495.7L607.8 515.1L588.4 534.4L569.1 515.1L588.4 495.7M627.2 456.9L646.6 476.3L627.2 495.7L607.8 476.3L627.2 456.9M549.7 456.9L569.1 476.3L549.7 495.7L530.3 476.3L549.7 456.9M607.8 437.6A43.3 43.3 0 0 0 569.1 437.6M599.4 446.1A32.2 32.2 0 0 0 577.5 446.1M627.2 495.7A43.3 43.3 0 0 0 627.2 456.9M618.7 487.3A32.2 32.2 0 0 0 618.7 465.3M569.1 515.1A43.3 43.3 0 0 0 607.8 515.1M577.5 506.5A32.2 32.2 0 0 0 599.4 506.5M549.7 456.9A43.3 43.3 0 0 0 549.7 495.7M558.2 465.3A32.2 32.2 0 0 0 558.2 487.3M782.2 394.1L864.4 476.3L782.2 558.5L700 476.3L782.2 394.1M782.2 394.1A41.1 41.1 0 0 0 823.3 435.2M823.3 435.2A41.1 41.1 0 0 0 864.4 476.3M823.3 517.4A41.1 41.1 0 0 0 782.2 558.5M864.4 476.3A41.1 41.1 0 0 0 823.3 517.4M741.1 435.2A41.1 41.1 0 0 0 782.2 394.1M700 476.3A41.1 41.1 0 0 0 741.1 435.2M782.2 558.5A41.1 41.1 0 0 0 741.1 517.4M741.1 517.4A41.1 41.1 0 0 0 700 476.3M782.2 476.3A41.1 41.1 0 0 0 823.3 435.2M741.1 435.2A41.1 41.1 0 0 0 782.2 476.3M823.3 517.4A41.1 41.1 0 0 0 782.2 476.3M782.2 476.3A41.1 41.1 0 0 0 741.1 517.4M823.3 435.2A41.1 41.1 0 0 0 782.2 476.3M782.2 476.3A41.1 41.1 0 0 0 823.3 517.4M782.2 476.3A41.1 41.1 0 0 0 741.1 435.2M741.1 517.4A41.1 41.1 0 0 0 782.2 476.3M976.3 394.1L1058.5 476.3L976.3 558.5L894.1 476.3L976.3 394.1M976.3 394.1A41.1 41.1 0 0 0 1017.4 435.2M1017.4 435.2A41.1 41.1 0 0 0 1058.5 476.3M1017.4 517.4A41.1 41.1 0 0 0 976.3 558.5M1058.5 476.3A41.1 41.1 0 0 0 1017.4 517.4M935.2 435.2A41.1 41.1 0 0 0 976.3 394.1M894.1 476.3A41.1 41.1 0 0 0 935.2 435.2M976.3 558.5A41.1 41.1 0 0 0 935.2 517.4M935.2 517.4A41.1 41.1 0 0 0 894.1 476.3M976.3 476.3A41.1 41.1 0 0 0 1017.4 435.2M935.2 435.2A41.1 41.1 0 0 0 976.3 476.3M1017.4 517.4A41.1 41.1 0 0 0 976.3 476.3M976.3 476.3A41.1 41.1 0 0 0 935.2 517.4M1017.4 435.2A41.1 41.1 0 0 0 976.3 476.3M976.3 476.3A41.1 41.1 0 0 0 1017.4 517.4M976.3 476.3A41.1 41.1 0 0 0 935.2 435.2M935.2 517.4A41.1 41.1 0 0 0 976.3 476.3M935.2 435.2L1017.4 435.2L1017.4 517.4L935.2 517.4L935.2 435.2M935.2 435.2L1017.4 517.4M935.2 517.4L1017.4 435.2M976.3 394.1L976.3 558.5M1058.5 476.3L894.1 476.3M220.3 611.6L297.8 689.1L220.3 766.6L142.8 689.1L220.3 611.6M181.6 650.3L259.1 727.8M181.6 727.8L259.1 650.3M181.6 650.3L206.6 650.3M234 650.3L259.1 650.3M259.1 727.8L259.1 702.8M259.1 675.4L259.1 650.3M181.6 727.8L206.6 727.8M234 727.8L259.1 727.8M181.6 727.8L181.6 702.8M181.6 675.4L181.6 650.3M220.3 611.6L220.3 630.9M220.3 669.7L220.3 708.4M220.3 747.2L220.3 766.6M297.8 689.1L278.4 689.1M239.7 689.1L200.9 689.1M162.2 689.1L142.8 689.1M200.9 630.9L239.7 630.9L239.7 669.7L200.9 669.7L200.9 630.9M220.3 630.9L239.7 650.3L220.3 669.7L200.9 650.3L220.3 630.9M200.9 708.4L239.7 708.4L239.7 747.2L200.9 747.2L200.9 708.4M220.3 708.4L239.7 727.8L220.3 747.2L200.9 727.8L220.3 708.4M239.7 669.7L278.4 669.7L278.4 708.4L239.7 708.4L239.7 669.7M259.1 669.7L278.4 689.1L259.1 708.4L239.7 689.1L259.1 669.7M162.2 669.7L200.9 669.7L200.9 708.4L162.2 708.4L162.2 669.7M181.6 669.7L200.9 689.1L181.6 708.4L162.2 689.1L181.6 669.7M588.4 592.6L665.9 670.1L588.4 747.6L510.9 670.1L588.4 592.6M549.7 631.3L627.2 708.8M549.7 708.8L627.2 631.3M588.4 592.6A38.8 38.8 0 0 0 627.2 631.3M627.2 631.3A38.8 38.8 0 0 0 665.9 670.1M627.2 708.8A38.8 38.8 0 0 0 588.4 747.6M665.9 670.1A38.8 38.8 0 0 0 627.2 708.8M549.7 631.3A38.8 38.8 0 0 0 588.4 592.6M510.9 670.1A38.8 38.8 0 0 0 549.7 631.3M588.4 747.6A38.8 38.8 0 0 0 549.7 708.8M549.7 708.8A38.8 38.8 0 0 0 510.9 670.1M588.4 670.1A38.8 38.8 0 0 0 627.2 631.3M549.7 631.3A38.8 38.8 0 0 0 588.4 670.1M627.2 708.8A38.8 38.8 0 0 0 588.4 670.1M588.4 670.1A38.8 38.8 0 0 0 549.7 708.8M627.2 631.3A38.8 38.8 0 0 0 588.4 670.1M588.4 670.1A38.8 38.8 0 0 0 627.2 708.8M588.4 670.1A38.8 38.8 0 0 0 549.7 631.3M549.7 708.8A38.8 38.8 0 0 0 588.4 670.1M782.2 592.6L804.9 615.3L837 615.3L837 647.4L859.7 670.1L837 692.8L837 724.9L804.9 724.9L782.2 747.6L759.5 724.9L727.4 724.9L727.4 692.8L704.7 670.1L727.4 647.4L727.4 615.3L759.5 615.3L782.2 592.6M782.2 592.6A38.8 38.8 0 0 0 820.9 631.3M820.9 631.3A38.8 38.8 0 0 0 859.7 670.1M820.9 708.8A38.8 38.8 0 0 0 782.2 747.6M859.7 670.1A38.8 38.8 0 0 0 820.9 708.8M743.4 631.3A38.8 38.8 0 0 0 782.2 592.6M704.7 670.1A38.8 38.8 0 0 0 743.4 631.3M782.2 747.6A38.8 38.8 0 0 0 743.4 708.8M743.4 708.8A38.8 38.8 0 0 0 704.7 670.1M782.2 670.1A38.8 38.8 0 0 0 820.9 631.3M743.4 631.3A38.8 38.8 0 0 0 782.2 670.1M820.9 708.8A38.8 38.8 0 0 0 782.2 670.1M782.2 670.1A38.8 38.8 0 0 0 743.4 708.8M820.9 631.3A38.8 38.8 0 0 0 782.2 670.1M782.2 670.1A38.8 38.8 0 0 0 820.9 708.8M782.2 670.1A38.8 38.8 0 0 0 743.4 631.3M743.4 708.8A38.8 38.8 0 0 0 782.2 670.1M727.4 615.3A38.8 38.8 0 0 0 782.2 615.3M782.2 615.3A38.8 38.8 0 0 0 837 615.3M837 670.1A38.8 38.8 0 0 0 837 724.9M837 615.3A38.8 38.8 0 0 0 837 670.1M727.4 670.1A38.8 38.8 0 0 0 727.4 615.3M727.4 724.9A38.8 38.8 0 0 0 727.4 670.1M837 724.9A38.8 38.8 0 0 0 782.2 724.9M782.2 724.9A38.8 38.8 0 0 0 727.4 724.9M782.2 670.1A38.8 38.8 0 0 0 782.2 615.3M727.4 670.1A38.8 38.8 0 0 0 782.2 670.1M837 670.1A38.8 38.8 0 0 0 782.2 670.1M782.2 670.1A38.8 38.8 0 0 0 782.2 724.9M782.2 615.3A38.8 38.8 0 0 0 782.2 670.1M782.2 670.1A38.8 38.8 0 0 0 837 670.1M782.2 670.1A38.8 38.8 0 0 0 727.4 670.1M782.2 724.9A38.8 38.8 0 0 0 782.2 670.1M975.2 591L1014.3 631.7L1055.4 670.6L1015.5 710.8L975.9 749.7L936.6 708.4L896.7 669.1L935.8 630L975.2 591M935.8 630L1015.5 710.8M1014.3 631.7L936.6 708.4"/><circle cx="200.9" cy="243.8" r="19.4"/><circle cx="200.9" cy="321.3" r="19.4"/><circle cx="239.7" cy="282.6" r="19.4"/><circle cx="162.2" cy="282.6" r="19.4"/><circle cx="394.7" cy="437.6" r="27.4"/><circle cx="394.7" cy="437.6" r="13.7"/><circle cx="394.7" cy="515.1" r="27.4"/><circle cx="394.7" cy="515.1" r="13.7"/><circle cx="433.4" cy="476.3" r="27.4"/><circle cx="433.4" cy="476.3" r="13.7"/><circle cx="355.9" cy="476.3" r="27.4"/><circle cx="355.9" cy="476.3" r="13.7"/><circle cx="434.8" cy="554.6" r="39.7"/><circle cx="782.2" cy="435.2" r="17"/><circle cx="782.2" cy="517.4" r="17"/><circle cx="823.3" cy="476.3" r="17"/><circle cx="741.1" cy="476.3" r="17"/><circle cx="976.3" cy="435.2" r="17"/><circle cx="976.3" cy="517.4" r="17"/><circle cx="1017.4" cy="476.3" r="17"/><circle cx="935.2" cy="476.3" r="17"/><circle cx="220.3" cy="650.3" r="13.7"/><circle cx="220.3" cy="650.3" r="19.4"/><circle cx="220.3" cy="650.3" r="27.4"/><circle cx="220.3" cy="727.8" r="13.7"/><circle cx="220.3" cy="727.8" r="19.4"/><circle cx="220.3" cy="727.8" r="27.4"/><circle cx="259.1" cy="689.1" r="13.7"/><circle cx="259.1" cy="689.1" r="19.4"/><circle cx="259.1" cy="689.1" r="27.4"/><circle cx="181.6" cy="689.1" r="13.7"/><circle cx="181.6" cy="689.1" r="19.4"/><circle cx="181.6" cy="689.1" r="27.4"/><circle cx="975.2" cy="630.2" r="39.6"/><circle cx="1015.9" cy="670.6" r="39.6"/><circle cx="975.9" cy="710.2" r="39.6"/><circle cx="935.8" cy="669.1" r="39.6"/></g><rect x="241" y="160" width="2" height="665" fill="none"/><path d="M242 160V825" stroke="#f0b410" stroke-opacity="0.5" stroke-width="2" stroke-dasharray="4 2" stroke-dashoffset="4" shape-rendering="crispEdges"/><path d="M103 162H1095" stroke="#f0b410" stroke-opacity="0.5" stroke-width="2" stroke-dasharray="4 2" stroke-dashoffset="1" shape-rendering="crispEdges"/><circle cx="1014.5" cy="514.5" r="4.5" fill="none" stroke="#c03030" stroke-width="1.2"/><path d="M1010 514.5h9M1014.5 510v9" stroke="#a03030" stroke-width=".8"/></g></svg></div>
<div style="left:1102px;top:399px;width:3px;height:193px;background:#8a8a8a;border-radius:1px"></div>
<div style="left:551px;top:834px;width:271px;height:2px;background:#858585"></div>
<span class="t" style="left:1068.5px;top:830.3px;font-size:10.9px;color:#000;">10 &lt; 100</span>
<div style="left:81px;top:847px;width:1014px;height:38px;background:#fff;overflow:hidden"></div>
<div style="left:81px;top:847px;width:1014px;height:38px;overflow:hidden"><span class="t" style="left:4.5px;top:-2.6px;font-size:10.7px">Undo: Line from 2 Points LI</span><span class="t" style="left:4.5px;top:9.9px;font-size:10.7px;color:#1c1cd0"><i>Command:</i> undo</span><span class="t" style="left:4.5px;top:22.7px;font-size:10.7px">Undo: Line from 2 Points LI</span></div>
<div style="left:1102px;top:864px;width:2px;height:4px;background:#8a8a8a"></div>
<div style="left:81px;top:885px;width:1030px;height:1px;background:#a8a8a8"></div>
<div style="left:1111px;top:847px;width:1px;height:64px;background:#8f9aa6"></div>
<span class="t" style="left:81.5px;top:894.2px;font-size:11px;color:#000;">First point:</span>
<div style="left:137px;top:891px;width:952px;height:16px;background:#fff"></div>
<div style="left:1090px;top:890px;width:19px;height:18px;box-sizing:border-box;border:1px solid #cfcfcf;border-radius:3px;background:#f8f8f8"></div>
<svg style="left:1092px;top:893px" width="14" height="11"><rect x=".5" y=".5" width="13" height="10" fill="#fff" stroke="#222"/><rect x="0" y="0" width="14" height="3" fill="#111"/></svg>
<div style="left:81px;top:910px;width:1030px;height:1px;background:#8f9aa6"></div>
<div style="left:1112px;top:115px;width:271px;height:796px;background:#f0f0f0"></div>
<div style="left:1116px;top:116px;width:256px;height:19px;box-sizing:border-box;border:1px solid #c8c8c8;background:#dadada"></div>
<span class="t" style="left:1121.5px;top:121.5px;font-size:11.2px;color:#000;">Layer List</span>
<svg style="left:1334px;top:120px" width="11" height="11"><rect x="1.5" y="3.5" width="6" height="6" fill="none" stroke="#222"/><path d="M3.5 3.5v-2h6v6h-2" fill="none" stroke="#222"/></svg>
<svg style="left:1355px;top:120px" width="10" height="10"><path d="M1 1l8 8M9 1l-8 8" stroke="#222" stroke-width="1.5"/></svg>
<div style="left:1118px;top:138px;width:48px;height:20px;box-sizing:border-box;border:1px solid #d4d4d4;border-radius:3px;background:#fff"></div>
<div style="left:1168px;top:138px;width:48px;height:20px;box-sizing:border-box;border:1px solid #d4d4d4;border-radius:3px;background:#fff"></div>
<div style="left:1219px;top:138px;width:48px;height:20px;box-sizing:border-box;border:1px solid #d4d4d4;border-radius:3px;background:#fff"></div>
<div style="left:1271px;top:138px;width:48px;height:20px;box-sizing:border-box;border:1px solid #d4d4d4;border-radius:3px;background:#fff"></div>
<div style="left:1322px;top:138px;width:48px;height:20px;box-sizing:border-box;border:1px solid #d4d4d4;border-radius:3px;background:#fff"></div>
<svg style="left:1133px;top:141px" width="16" height="13"><ellipse cx="8" cy="6.5" rx="7.3" ry="5.6" fill="#111"/><path d="M2.5 7q5.5-5 11 0q-5.5 4.5-11 0z" fill="#fff"/><circle cx="8" cy="6.3" r="2.3" fill="#111"/><circle cx="7.3" cy="5.6" r=".7" fill="#fff"/></svg>
<svg style="left:1184px;top:141px" width="16" height="13"><ellipse cx="8" cy="6.5" rx="7.3" ry="5.6" fill="#a4a4a4"/><path d="M2.5 7q5.5-5 11 0q-5.5 4.5-11 0z" fill="#fff"/><circle cx="8" cy="6.3" r="2.3" fill="#a4a4a4"/></svg>
<svg style="left:1236px;top:140px" width="14" height="14"><path d="M7 1v12M1 7h12" stroke="#e00" stroke-width="3.5"/></svg>
<svg style="left:1288px;top:145px" width="14" height="5"><path d="M1 2.5h12" stroke="#e00" stroke-width="3.5"/></svg>
<svg style="left:1337px;top:139px" width="18" height="18"><path d="M2 16l2-5L14 1l3 3L7 14z" fill="#e8b040" stroke="#a07020" stroke-width=".8"/><path d="M14 1l3 3" stroke="#e03030" stroke-width="2.5"/></svg>
<div style="left:1116px;top:159px;width:256px;height:752px;box-sizing:border-box;border:1px solid #8f9aa6;background:#fff"></div>
<div style="left:1118px;top:161px;width:252px;height:20px;box-sizing:border-box;border:1px solid #7a7a7a;background:#d9d9d9"></div>
<svg style="left:1121px;top:165px" width="16" height="13"><ellipse cx="8" cy="6" rx="7.3" ry="5.6" fill="#14304e"/><path d="M2.5 6.5q5.5-5 11 0q-5.5 4.5-11 0z" fill="#fff"/><circle cx="8" cy="5.8" r="2.3" fill="#14304e"/></svg>
<svg style="left:1141px;top:163px" width="11" height="15"><path d="M2.5 7V4.5a3 3 0 0 1 6 0V7" fill="none" stroke="#7f9dbd" stroke-width="1.6"/><rect x="0.5" y="7" width="10" height="7.5" fill="#7f9dbd"/></svg>
<span class="t" style="left:1159.5px;top:165.3px;font-size:12px;color:#000;">0</span>
<div style="left:1374px;top:125px;width:12px;height:29px;box-sizing:border-box;border:1px solid #777;background:linear-gradient(90deg,#9a9a9a,#e0e0e0)"></div>
<div style="left:1377px;top:157px;width:8px;height:22px;box-sizing:border-box;border:1px solid #bbb;background:#fff"></div>
<div style="left:1375px;top:185px;width:8px;height:1px;background:#d0d0d0"></div>
<div style="left:1374px;top:189px;width:12px;height:29px;box-sizing:border-box;border:1px solid #777;background:linear-gradient(90deg,#9a9a9a,#e0e0e0)"></div>
<div style="left:1375px;top:221px;width:8px;height:1px;background:#d0d0d0"></div>
<div style="left:1374px;top:224px;width:12px;height:29px;box-sizing:border-box;border:1px solid #777;background:linear-gradient(90deg,#9a9a9a,#e0e0e0)"></div>
<svg style="left:1377px;top:127px" width="6" height="125"><rect x="0" y="2" width="6" height="22" fill="#fff"/><rect x="2" y="2" width="4" height="3" fill="#000"/><rect x="1" y="32" width="5" height="2" fill="#000"/><rect x="0" y="66" width="6" height="22" fill="#fff"/><rect x="2" y="66" width="4" height="3" fill="#000"/><rect x="3" y="73" width="3" height="2" fill="#000"/><rect x="3" y="77" width="3" height="2" fill="#000"/><rect x="3" y="81" width="3" height="2" fill="#000"/><rect x="0" y="101" width="6" height="22" fill="#fff"/><rect x="2" y="101" width="4" height="3" fill="#000"/></svg>
<div style="left:74px;top:102px;width:86px;height:19px;box-sizing:border-box;border:1px solid #c8c8c8;border-radius:2px;background:#fff;box-shadow:1px 2px 3px rgba(0,0,0,.25)"></div>
<span class="t" style="left:80.5px;top:105.6px;font-size:11.5px;color:#575757;">Line Segment</span>
<div style="left:0px;top:911px;width:1383px;height:42px;background:#f0f0f0"></div>
<span class="t" style="left:0.0px;top:918.8px;font-size:12.5px;color:#000;">171.2174,312.1866</span>
<span class="t" style="left:0.0px;top:939.7px;font-size:12.5px;color:#000;">@-398.7826,182.1866</span>
<div style="left:233px;top:914px;width:1px;height:39px;background:#a0a0a0"></div>
<span class="t" style="left:237.0px;top:918.8px;font-size:12.5px;color:#000;">356.056&lt;61°</span>
<span class="t" style="left:237.0px;top:939.7px;font-size:12.5px;color:#000;">@438.4284&lt;155°</span>
<span class="t" style="left:597.0px;top:928.6px;font-size:12.3px;color:#000;">First point</span>
<svg style="left:664px;top:918px" width="20" height="30"><rect x="1" y="1" width="18" height="28" rx="9" fill="#fff" stroke="#444"/><path d="M1 12h18M10 1v11" stroke="#444"/><rect x="8" y="4" width="4" height="7" rx="2" fill="#fff" stroke="#444"/></svg>
<span class="t" style="left:698.0px;top:928.6px;font-size:12.3px;color:#000;">Cancel</span>
<span class="t" style="left:882.0px;top:928.6px;font-size:12.3px;color:#000;">No entities selected.</span>
</body></html>
